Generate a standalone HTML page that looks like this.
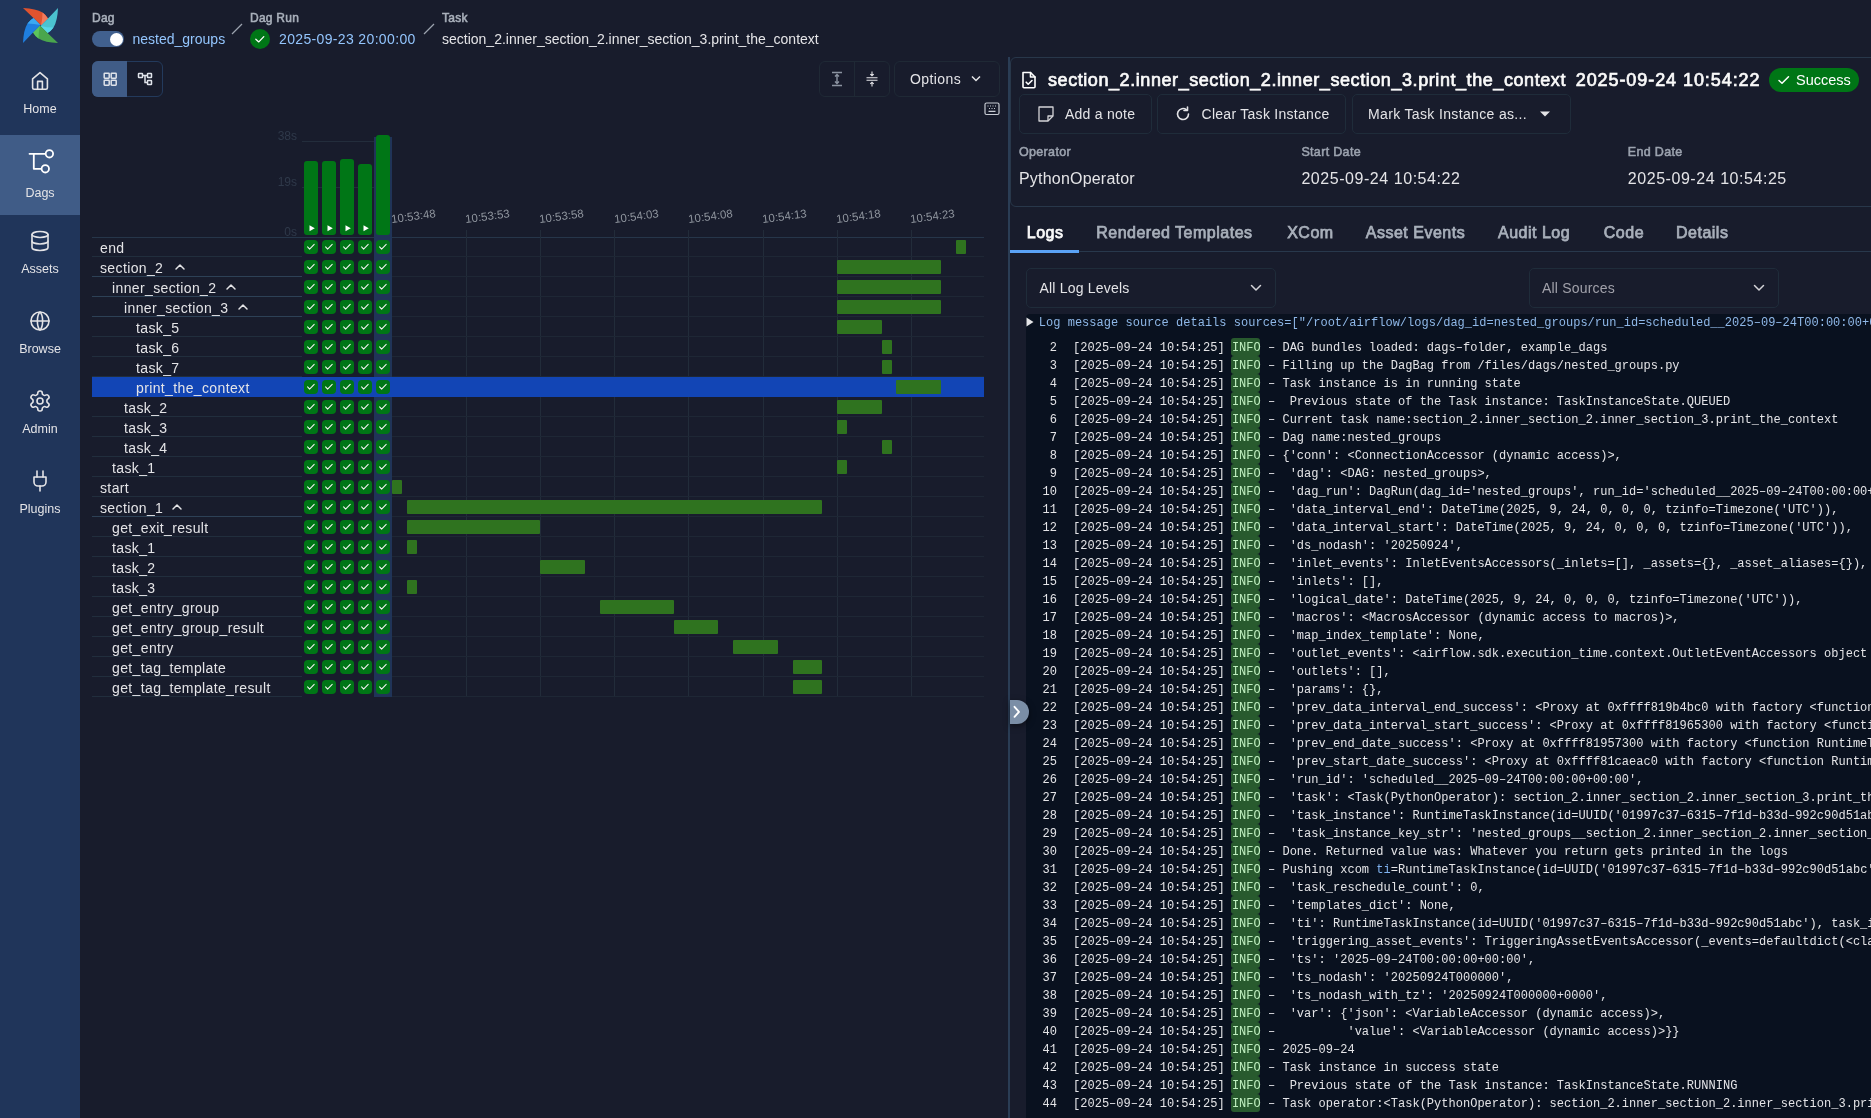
<!DOCTYPE html><html><head><meta charset="utf-8"><style>
html,body{margin:0;padding:0;}
body{width:1871px;height:1118px;overflow:hidden;position:relative;background:#181c2c;font-family:'Liberation Sans', sans-serif;}
.t{position:absolute;white-space:pre;}
.b{position:absolute;box-sizing:border-box;}
svg{position:absolute;overflow:visible;}
</style></head><body><div style="position:absolute;left:0;top:0;width:1871px;height:1118px;will-change:transform;overflow:hidden">
<div class="b" style="left:0px;top:0px;width:80px;height:1118px;background:#20355a;"></div>
<div class="b" style="left:0px;top:135px;width:80px;height:80px;background:#405c87;"></div>
<svg style="left:23px;top:8px" width="35" height="35" viewBox="0 0 35 35"><g><path d="M0 0 Q13 0.5 19.5 4.5 Q23 7 25 10.5 L18 17.5 Q14 13.5 11 10.5 Z" fill="#e0532f"/><path d="M19.5 4.5 Q23 7 25 10.5 L18 17.5 Q19.5 11 19.5 4.5 Z" fill="#f27a5c"/></g><g transform="rotate(90 17.5 17.5)"><path d="M0 0 Q13 0.5 19.5 4.5 Q23 7 25 10.5 L18 17.5 Q14 13.5 11 10.5 Z" fill="#4bc3cf"/><path d="M19.5 4.5 Q23 7 25 10.5 L18 17.5 Q19.5 11 19.5 4.5 Z" fill="#58d6e8"/></g><g transform="rotate(180 17.5 17.5)"><path d="M0 0 Q13 0.5 19.5 4.5 Q23 7 25 10.5 L18 17.5 Q14 13.5 11 10.5 Z" fill="#4aa64d"/><path d="M19.5 4.5 Q23 7 25 10.5 L18 17.5 Q19.5 11 19.5 4.5 Z" fill="#5cc45c"/></g><g transform="rotate(270 17.5 17.5)"><path d="M0 0 Q13 0.5 19.5 4.5 Q23 7 25 10.5 L18 17.5 Q14 13.5 11 10.5 Z" fill="#1f7fe0"/><path d="M19.5 4.5 Q23 7 25 10.5 L18 17.5 Q19.5 11 19.5 4.5 Z" fill="#3ba9f2"/></g></svg>
<svg style="left:28px;top:69px" width="24" height="24" viewBox="0 0 24 24" fill="none" stroke="#e4e4e7" stroke-width="1.6" stroke-linecap="round" stroke-linejoin="round"><path d="M4.6 9.8 L12 3.6 L19.4 9.8 V18.8 Q19.4 20.3 17.9 20.3 H6.1 Q4.6 20.3 4.6 18.8 Z"/><path d="M9.6 20.3 V12.4 H14.4 V20.3"/></svg>
<div class="t" style="left:0;width:80px;text-align:center;top:103px;font-size:12.5px;line-height:13px;color:#e4e4e7">Home</div>
<svg style="left:20px;top:140px" width="40" height="40" fill="none" stroke="#fff" stroke-width="1.8" stroke-linecap="round" stroke-linejoin="round"><path d="M9.5 13.8 H25.7 M13.8 13.8 V28.8 H21.6"/><circle cx="29.4" cy="13.8" r="3.7" fill="#405c87"/><circle cx="25.3" cy="28.8" r="3.7" fill="#405c87"/></svg>
<div class="t" style="left:0;width:80px;text-align:center;top:187px;font-size:12.5px;line-height:13px;color:#e4e4e7">Dags</div>
<svg style="left:28px;top:229px" width="24" height="24" viewBox="0 0 24 24" fill="none" stroke="#e4e4e7" stroke-width="1.6" stroke-linecap="round" stroke-linejoin="round"><ellipse cx="12" cy="5.5" rx="8" ry="3"/><path d="M4 5.5 V18.5 A8 3 0 0 0 20 18.5 V5.5"/><path d="M4 12 A8 3 0 0 0 20 12"/></svg>
<div class="t" style="left:0;width:80px;text-align:center;top:263px;font-size:12.5px;line-height:13px;color:#e4e4e7">Assets</div>
<svg style="left:28px;top:309px" width="24" height="24" viewBox="0 0 24 24" fill="none" stroke="#e4e4e7" stroke-width="1.6" stroke-linecap="round" stroke-linejoin="round"><circle cx="12" cy="12" r="9"/><path d="M3 12 H21"/><path d="M12 3 C8.5 6.5 8.5 17.5 12 21 C15.5 17.5 15.5 6.5 12 3Z"/></svg>
<div class="t" style="left:0;width:80px;text-align:center;top:343px;font-size:12.5px;line-height:13px;color:#e4e4e7">Browse</div>
<svg style="left:28px;top:389px" width="24" height="24" viewBox="0 0 24 24" fill="none" stroke="#e4e4e7" stroke-width="1.6" stroke-linecap="round" stroke-linejoin="round"><path d="M12.22 2h-.44a2 2 0 0 0-2 2v.18a2 2 0 0 1-1 1.73l-.43.25a2 2 0 0 1-2 0l-.15-.08a2 2 0 0 0-2.73.73l-.22.38a2 2 0 0 0 .73 2.73l.15.1a2 2 0 0 1 1 1.72v.51a2 2 0 0 1-1 1.74l-.15.09a2 2 0 0 0-.73 2.73l.22.38a2 2 0 0 0 2.73.73l.15-.08a2 2 0 0 1 2 0l.43.25a2 2 0 0 1 1 1.73V20a2 2 0 0 0 2 2h.44a2 2 0 0 0 2-2v-.18a2 2 0 0 1 1-1.73l.43-.25a2 2 0 0 1 2 0l.15.08a2 2 0 0 0 2.73-.73l.22-.39a2 2 0 0 0-.73-2.73l-.15-.08a2 2 0 0 1-1-1.74v-.5a2 2 0 0 1 1-1.74l.15-.09a2 2 0 0 0 .73-2.73l-.22-.38a2 2 0 0 0-2.73-.73l-.15.08a2 2 0 0 1-2 0l-.43-.25a2 2 0 0 1-1-1.73V4a2 2 0 0 0-2-2z"/><circle cx="12" cy="12" r="3"/></svg>
<div class="t" style="left:0;width:80px;text-align:center;top:423px;font-size:12.5px;line-height:13px;color:#e4e4e7">Admin</div>
<svg style="left:28px;top:469px" width="24" height="24" viewBox="0 0 24 24" fill="none" stroke="#e4e4e7" stroke-width="1.6" stroke-linecap="round" stroke-linejoin="round"><path d="M12 22v-5"/><path d="M9 8V2"/><path d="M15 8V2"/><path d="M18 8v5a4 4 0 0 1-4 4h-4a4 4 0 0 1-4-4V8Z"/></svg>
<div class="t" style="left:0;width:80px;text-align:center;top:503px;font-size:12.5px;line-height:13px;color:#e4e4e7">Plugins</div>
<div class="t" style="left:92px;top:12.30px;font-size:12px;line-height:12px;color:#a9b0bb;letter-spacing:0.25px;-webkit-text-stroke:0.55px #a9b0bb;">Dag</div>
<div class="b" style="left:92px;top:31px;width:32px;height:16px;background:#41608e;border-radius:8px;"></div>
<div class="b" style="left:109.5px;top:32.5px;width:13px;height:13px;border-radius:50%;background:#fff"></div>
<div class="t" style="left:132.5px;top:32.00px;font-size:14px;line-height:14px;color:#93c5fd;">nested_groups</div>
<svg style="left:231px;top:23px" width="12" height="12"><path d="M1 11 L11 1" stroke="#9ca3af" stroke-width="1.2"/></svg>
<div class="t" style="left:250px;top:12.30px;font-size:12px;line-height:12px;color:#a9b0bb;letter-spacing:0.25px;-webkit-text-stroke:0.55px #a9b0bb;">Dag Run</div>
<div class="b" style="left:250px;top:29px;width:20px;height:20px;border-radius:50%;background:#007616"></div>
<svg style="left:250px;top:29px" width="20" height="20"><path d="M5.8 10.2 L8.8 12.9 L13.8 7.6" fill="none" stroke="#fff" stroke-width="1.3" stroke-linecap="round" stroke-linejoin="round"/></svg>
<div class="t" style="left:279px;top:32.00px;font-size:14px;line-height:14px;color:#93c5fd;letter-spacing:0.35px;">2025-09-23 20:00:00</div>
<svg style="left:423px;top:23px" width="12" height="12"><path d="M1 11 L11 1" stroke="#9ca3af" stroke-width="1.2"/></svg>
<div class="t" style="left:442px;top:12.30px;font-size:12px;line-height:12px;color:#a9b0bb;letter-spacing:0.25px;-webkit-text-stroke:0.55px #a9b0bb;">Task</div>
<div class="t" style="left:442px;top:32.00px;font-size:14px;line-height:14px;color:#e4e4e7;">section_2.inner_section_2.inner_section_3.print_the_context</div>
<div class="b" style="left:92px;top:61px;width:71px;height:36px;border:1px solid #233a5c;border-radius:6px;"></div>
<div class="b" style="left:92px;top:61px;width:35px;height:36px;background:#405c87;border-radius:6px 0 0 6px;"></div>
<svg style="left:102px;top:71px" width="16" height="16" fill="none" stroke="#dfe3ea" stroke-width="1.5"><rect x="2.2" x2="0" y="2.2" width="5" height="5" rx="0.6"/><rect x="9.2" y="2.2" width="5" height="5" rx="0.6"/><rect x="2.2" y="9.2" width="5" height="5" rx="0.6"/><rect x="9.2" y="9.2" width="5" height="5" rx="0.6"/></svg>
<svg style="left:137px;top:71px" width="16" height="16" fill="none" stroke="#dfe3ea" stroke-width="1.5"><rect x="1.5" y="2.5" width="4" height="4" rx="0.5"/><rect x="10.5" y="2.5" width="4" height="4" rx="0.5"/><rect x="10.5" y="9.5" width="4" height="4" rx="0.5"/><path d="M5.5 4.5 H10.5 M8 4.5 V11.5 H10.5"/></svg>
<div class="b" style="left:819px;top:61px;width:71px;height:36px;border:1px solid #1f2935;border-radius:6px;"></div>
<div class="b" style="left:854px;top:61px;width:1px;height:36px;background:#1f2935;"></div>
<svg style="left:829px;top:71px" width="16" height="16" fill="none" stroke="#8b93a1" stroke-width="1.4"><path d="M3 1.5 H13 M3 14.5 H13 M8 3.5 V12.5 M6 5.5 L8 3.5 L10 5.5 M6 10.5 L8 12.5 L10 10.5"/></svg>
<svg style="left:864px;top:71px" width="16" height="16" fill="none" stroke="#e4e4e7" stroke-width="1.1"><path d="M2.5 6.8 H13.5 M2.5 9.2 H13.5 M8 0.5 V4.8 M6.3 3.1 L8 4.8 L9.7 3.1 M8 15.5 V11.2 M6.3 12.9 L8 11.2 L9.7 12.9"/></svg>
<div class="b" style="left:894px;top:61px;width:106px;height:36px;border:1px solid #1f2935;border-radius:6px;"></div>
<div class="t" style="left:910px;top:72.00px;font-size:14px;line-height:14px;color:#e4e4e7;letter-spacing:0.4px;">Options</div>
<svg style="left:970px;top:74px" width="12" height="10" fill="none" stroke="#e4e4e7" stroke-width="1.5"><path d="M2 2.5 L6 6.5 L10 2.5"/></svg>
<svg style="left:984px;top:102px" width="16" height="14" fill="none" stroke="#c8ccd4" stroke-width="1.2"><rect x="1" y="1" width="14" height="11.5" rx="1.5"/><path d="M3.5 4 H4.5 M6 4 H7 M8.5 4 H9.5 M11 4 H12 M5 6.5 H6 M7.5 6.5 H8.5 M10 6.5 H11 M4.5 9.3 H11.5"/></svg>
<div class="t" style="left:257px;width:40px;text-align:right;top:129.5px;font-size:12px;line-height:12px;color:#2f394a">38s</div>
<div class="t" style="left:257px;width:40px;text-align:right;top:175.5px;font-size:12px;line-height:12px;color:#2f394a">19s</div>
<div class="t" style="left:257px;width:40px;text-align:right;top:226px;font-size:12px;line-height:12px;color:#2f394a">0s</div>
<div class="b" style="left:302px;top:141px;width:72px;height:1px;background:#232d3c;"></div>
<div class="b" style="left:302px;top:187px;width:72px;height:1px;background:#232d3c;"></div>
<div class="b" style="left:92px;top:237px;width:892px;height:1px;background:#26364a;"></div>
<div class="b" style="left:374px;top:137px;width:18px;height:560px;background:#203458;"></div>
<div class="b" style="left:304px;top:161px;width:14px;height:74px;background:#007616;border-radius:3px;"></div>
<svg style="left:308.5px;top:225px" width="7" height="7"><path d="M0.5 0.3 L5.8 3.3 L0.5 6.3Z" fill="#fff"/></svg>
<div class="b" style="left:322px;top:161px;width:14px;height:74px;background:#007616;border-radius:3px;"></div>
<svg style="left:326.5px;top:225px" width="7" height="7"><path d="M0.5 0.3 L5.8 3.3 L0.5 6.3Z" fill="#fff"/></svg>
<div class="b" style="left:340px;top:159px;width:14px;height:76px;background:#007616;border-radius:3px;"></div>
<svg style="left:344.5px;top:225px" width="7" height="7"><path d="M0.5 0.3 L5.8 3.3 L0.5 6.3Z" fill="#fff"/></svg>
<div class="b" style="left:358px;top:164px;width:14px;height:71px;background:#007616;border-radius:3px;"></div>
<svg style="left:362.5px;top:225px" width="7" height="7"><path d="M0.5 0.3 L5.8 3.3 L0.5 6.3Z" fill="#fff"/></svg>
<div class="b" style="left:376px;top:135px;width:14px;height:100px;background:#007616;border-radius:3px;"></div>
<div class="b" style="left:466px;top:230px;width:1px;height:467px;background:#222c3a;"></div>
<div class="b" style="left:540px;top:230px;width:1px;height:467px;background:#222c3a;"></div>
<div class="b" style="left:614px;top:230px;width:1px;height:467px;background:#222c3a;"></div>
<div class="b" style="left:688px;top:230px;width:1px;height:467px;background:#222c3a;"></div>
<div class="b" style="left:763px;top:230px;width:1px;height:467px;background:#222c3a;"></div>
<div class="b" style="left:837px;top:230px;width:1px;height:467px;background:#222c3a;"></div>
<div class="b" style="left:911px;top:230px;width:1px;height:467px;background:#222c3a;"></div>
<div class="b" style="left:92px;top:256px;width:210px;height:1px;background:#212e3d;"></div>
<div class="b" style="left:392px;top:256px;width:592px;height:1px;background:#1e2735;"></div>
<div class="t" style="left:100px;top:241.40px;font-size:14px;line-height:14px;color:#e4e4e7;letter-spacing:0.37px;">end</div>
<div class="b" style="left:304px;top:240px;width:14px;height:14px;border-radius:4px;background:#007616"></div>
<svg style="left:304px;top:240px" width="14" height="14"><path d="M3.6 6.8 L5.6 9.1 L10.2 4.4" fill="none" stroke="#f4f4f5" stroke-width="1.05" stroke-linecap="round" stroke-linejoin="round"/></svg>
<div class="b" style="left:322px;top:240px;width:14px;height:14px;border-radius:4px;background:#007616"></div>
<svg style="left:322px;top:240px" width="14" height="14"><path d="M3.6 6.8 L5.6 9.1 L10.2 4.4" fill="none" stroke="#f4f4f5" stroke-width="1.05" stroke-linecap="round" stroke-linejoin="round"/></svg>
<div class="b" style="left:340px;top:240px;width:14px;height:14px;border-radius:4px;background:#007616"></div>
<svg style="left:340px;top:240px" width="14" height="14"><path d="M3.6 6.8 L5.6 9.1 L10.2 4.4" fill="none" stroke="#f4f4f5" stroke-width="1.05" stroke-linecap="round" stroke-linejoin="round"/></svg>
<div class="b" style="left:358px;top:240px;width:14px;height:14px;border-radius:4px;background:#007616"></div>
<svg style="left:358px;top:240px" width="14" height="14"><path d="M3.6 6.8 L5.6 9.1 L10.2 4.4" fill="none" stroke="#f4f4f5" stroke-width="1.05" stroke-linecap="round" stroke-linejoin="round"/></svg>
<div class="b" style="left:376px;top:240px;width:14px;height:14px;border-radius:4px;background:#007616"></div>
<svg style="left:376px;top:240px" width="14" height="14"><path d="M3.6 6.8 L5.6 9.1 L10.2 4.4" fill="none" stroke="#f4f4f5" stroke-width="1.05" stroke-linecap="round" stroke-linejoin="round"/></svg>
<div class="b" style="left:956px;top:240px;width:10px;height:14px;background:#2f731f;border-radius:1px;"></div>
<div class="b" style="left:92px;top:276px;width:210px;height:1px;background:#2d4156;"></div>
<div class="b" style="left:392px;top:276px;width:592px;height:1px;background:#1e2735;"></div>
<div class="t" style="left:100px;top:261.40px;font-size:14px;line-height:14px;color:#e4e4e7;letter-spacing:0.37px;">section_2</div>
<svg style="left:175px;top:263px" width="10" height="8"><path d="M1 6 L5 2 L9 6" fill="none" stroke="#e4e4e7" stroke-width="1.5" stroke-linecap="round" stroke-linejoin="round"/></svg>
<div class="b" style="left:304px;top:260px;width:14px;height:14px;border-radius:4px;background:#007616"></div>
<svg style="left:304px;top:260px" width="14" height="14"><path d="M3.6 6.8 L5.6 9.1 L10.2 4.4" fill="none" stroke="#f4f4f5" stroke-width="1.05" stroke-linecap="round" stroke-linejoin="round"/></svg>
<div class="b" style="left:322px;top:260px;width:14px;height:14px;border-radius:4px;background:#007616"></div>
<svg style="left:322px;top:260px" width="14" height="14"><path d="M3.6 6.8 L5.6 9.1 L10.2 4.4" fill="none" stroke="#f4f4f5" stroke-width="1.05" stroke-linecap="round" stroke-linejoin="round"/></svg>
<div class="b" style="left:340px;top:260px;width:14px;height:14px;border-radius:4px;background:#007616"></div>
<svg style="left:340px;top:260px" width="14" height="14"><path d="M3.6 6.8 L5.6 9.1 L10.2 4.4" fill="none" stroke="#f4f4f5" stroke-width="1.05" stroke-linecap="round" stroke-linejoin="round"/></svg>
<div class="b" style="left:358px;top:260px;width:14px;height:14px;border-radius:4px;background:#007616"></div>
<svg style="left:358px;top:260px" width="14" height="14"><path d="M3.6 6.8 L5.6 9.1 L10.2 4.4" fill="none" stroke="#f4f4f5" stroke-width="1.05" stroke-linecap="round" stroke-linejoin="round"/></svg>
<div class="b" style="left:376px;top:260px;width:14px;height:14px;border-radius:4px;background:#007616"></div>
<svg style="left:376px;top:260px" width="14" height="14"><path d="M3.6 6.8 L5.6 9.1 L10.2 4.4" fill="none" stroke="#f4f4f5" stroke-width="1.05" stroke-linecap="round" stroke-linejoin="round"/></svg>
<div class="b" style="left:837px;top:260px;width:104px;height:14px;background:#2f731f;border-radius:1px;"></div>
<div class="b" style="left:92px;top:296px;width:210px;height:1px;background:#2d4156;"></div>
<div class="b" style="left:392px;top:296px;width:592px;height:1px;background:#1e2735;"></div>
<div class="t" style="left:112px;top:281.40px;font-size:14px;line-height:14px;color:#e4e4e7;letter-spacing:0.37px;">inner_section_2</div>
<svg style="left:226px;top:283px" width="10" height="8"><path d="M1 6 L5 2 L9 6" fill="none" stroke="#e4e4e7" stroke-width="1.5" stroke-linecap="round" stroke-linejoin="round"/></svg>
<div class="b" style="left:304px;top:280px;width:14px;height:14px;border-radius:4px;background:#007616"></div>
<svg style="left:304px;top:280px" width="14" height="14"><path d="M3.6 6.8 L5.6 9.1 L10.2 4.4" fill="none" stroke="#f4f4f5" stroke-width="1.05" stroke-linecap="round" stroke-linejoin="round"/></svg>
<div class="b" style="left:322px;top:280px;width:14px;height:14px;border-radius:4px;background:#007616"></div>
<svg style="left:322px;top:280px" width="14" height="14"><path d="M3.6 6.8 L5.6 9.1 L10.2 4.4" fill="none" stroke="#f4f4f5" stroke-width="1.05" stroke-linecap="round" stroke-linejoin="round"/></svg>
<div class="b" style="left:340px;top:280px;width:14px;height:14px;border-radius:4px;background:#007616"></div>
<svg style="left:340px;top:280px" width="14" height="14"><path d="M3.6 6.8 L5.6 9.1 L10.2 4.4" fill="none" stroke="#f4f4f5" stroke-width="1.05" stroke-linecap="round" stroke-linejoin="round"/></svg>
<div class="b" style="left:358px;top:280px;width:14px;height:14px;border-radius:4px;background:#007616"></div>
<svg style="left:358px;top:280px" width="14" height="14"><path d="M3.6 6.8 L5.6 9.1 L10.2 4.4" fill="none" stroke="#f4f4f5" stroke-width="1.05" stroke-linecap="round" stroke-linejoin="round"/></svg>
<div class="b" style="left:376px;top:280px;width:14px;height:14px;border-radius:4px;background:#007616"></div>
<svg style="left:376px;top:280px" width="14" height="14"><path d="M3.6 6.8 L5.6 9.1 L10.2 4.4" fill="none" stroke="#f4f4f5" stroke-width="1.05" stroke-linecap="round" stroke-linejoin="round"/></svg>
<div class="b" style="left:837px;top:280px;width:104px;height:14px;background:#2f731f;border-radius:1px;"></div>
<div class="b" style="left:92px;top:316px;width:210px;height:1px;background:#2d4156;"></div>
<div class="b" style="left:392px;top:316px;width:592px;height:1px;background:#1e2735;"></div>
<div class="t" style="left:124px;top:301.40px;font-size:14px;line-height:14px;color:#e4e4e7;letter-spacing:0.37px;">inner_section_3</div>
<svg style="left:238px;top:303px" width="10" height="8"><path d="M1 6 L5 2 L9 6" fill="none" stroke="#e4e4e7" stroke-width="1.5" stroke-linecap="round" stroke-linejoin="round"/></svg>
<div class="b" style="left:304px;top:300px;width:14px;height:14px;border-radius:4px;background:#007616"></div>
<svg style="left:304px;top:300px" width="14" height="14"><path d="M3.6 6.8 L5.6 9.1 L10.2 4.4" fill="none" stroke="#f4f4f5" stroke-width="1.05" stroke-linecap="round" stroke-linejoin="round"/></svg>
<div class="b" style="left:322px;top:300px;width:14px;height:14px;border-radius:4px;background:#007616"></div>
<svg style="left:322px;top:300px" width="14" height="14"><path d="M3.6 6.8 L5.6 9.1 L10.2 4.4" fill="none" stroke="#f4f4f5" stroke-width="1.05" stroke-linecap="round" stroke-linejoin="round"/></svg>
<div class="b" style="left:340px;top:300px;width:14px;height:14px;border-radius:4px;background:#007616"></div>
<svg style="left:340px;top:300px" width="14" height="14"><path d="M3.6 6.8 L5.6 9.1 L10.2 4.4" fill="none" stroke="#f4f4f5" stroke-width="1.05" stroke-linecap="round" stroke-linejoin="round"/></svg>
<div class="b" style="left:358px;top:300px;width:14px;height:14px;border-radius:4px;background:#007616"></div>
<svg style="left:358px;top:300px" width="14" height="14"><path d="M3.6 6.8 L5.6 9.1 L10.2 4.4" fill="none" stroke="#f4f4f5" stroke-width="1.05" stroke-linecap="round" stroke-linejoin="round"/></svg>
<div class="b" style="left:376px;top:300px;width:14px;height:14px;border-radius:4px;background:#007616"></div>
<svg style="left:376px;top:300px" width="14" height="14"><path d="M3.6 6.8 L5.6 9.1 L10.2 4.4" fill="none" stroke="#f4f4f5" stroke-width="1.05" stroke-linecap="round" stroke-linejoin="round"/></svg>
<div class="b" style="left:837px;top:300px;width:104px;height:14px;background:#2f731f;border-radius:1px;"></div>
<div class="b" style="left:92px;top:336px;width:210px;height:1px;background:#212e3d;"></div>
<div class="b" style="left:392px;top:336px;width:592px;height:1px;background:#1e2735;"></div>
<div class="t" style="left:136px;top:321.40px;font-size:14px;line-height:14px;color:#e4e4e7;letter-spacing:0.37px;">task_5</div>
<div class="b" style="left:304px;top:320px;width:14px;height:14px;border-radius:4px;background:#007616"></div>
<svg style="left:304px;top:320px" width="14" height="14"><path d="M3.6 6.8 L5.6 9.1 L10.2 4.4" fill="none" stroke="#f4f4f5" stroke-width="1.05" stroke-linecap="round" stroke-linejoin="round"/></svg>
<div class="b" style="left:322px;top:320px;width:14px;height:14px;border-radius:4px;background:#007616"></div>
<svg style="left:322px;top:320px" width="14" height="14"><path d="M3.6 6.8 L5.6 9.1 L10.2 4.4" fill="none" stroke="#f4f4f5" stroke-width="1.05" stroke-linecap="round" stroke-linejoin="round"/></svg>
<div class="b" style="left:340px;top:320px;width:14px;height:14px;border-radius:4px;background:#007616"></div>
<svg style="left:340px;top:320px" width="14" height="14"><path d="M3.6 6.8 L5.6 9.1 L10.2 4.4" fill="none" stroke="#f4f4f5" stroke-width="1.05" stroke-linecap="round" stroke-linejoin="round"/></svg>
<div class="b" style="left:358px;top:320px;width:14px;height:14px;border-radius:4px;background:#007616"></div>
<svg style="left:358px;top:320px" width="14" height="14"><path d="M3.6 6.8 L5.6 9.1 L10.2 4.4" fill="none" stroke="#f4f4f5" stroke-width="1.05" stroke-linecap="round" stroke-linejoin="round"/></svg>
<div class="b" style="left:376px;top:320px;width:14px;height:14px;border-radius:4px;background:#007616"></div>
<svg style="left:376px;top:320px" width="14" height="14"><path d="M3.6 6.8 L5.6 9.1 L10.2 4.4" fill="none" stroke="#f4f4f5" stroke-width="1.05" stroke-linecap="round" stroke-linejoin="round"/></svg>
<div class="b" style="left:837px;top:320px;width:44.60000000000002px;height:14px;background:#2f731f;border-radius:1px;"></div>
<div class="b" style="left:92px;top:356px;width:210px;height:1px;background:#212e3d;"></div>
<div class="b" style="left:392px;top:356px;width:592px;height:1px;background:#1e2735;"></div>
<div class="t" style="left:136px;top:341.40px;font-size:14px;line-height:14px;color:#e4e4e7;letter-spacing:0.37px;">task_6</div>
<div class="b" style="left:304px;top:340px;width:14px;height:14px;border-radius:4px;background:#007616"></div>
<svg style="left:304px;top:340px" width="14" height="14"><path d="M3.6 6.8 L5.6 9.1 L10.2 4.4" fill="none" stroke="#f4f4f5" stroke-width="1.05" stroke-linecap="round" stroke-linejoin="round"/></svg>
<div class="b" style="left:322px;top:340px;width:14px;height:14px;border-radius:4px;background:#007616"></div>
<svg style="left:322px;top:340px" width="14" height="14"><path d="M3.6 6.8 L5.6 9.1 L10.2 4.4" fill="none" stroke="#f4f4f5" stroke-width="1.05" stroke-linecap="round" stroke-linejoin="round"/></svg>
<div class="b" style="left:340px;top:340px;width:14px;height:14px;border-radius:4px;background:#007616"></div>
<svg style="left:340px;top:340px" width="14" height="14"><path d="M3.6 6.8 L5.6 9.1 L10.2 4.4" fill="none" stroke="#f4f4f5" stroke-width="1.05" stroke-linecap="round" stroke-linejoin="round"/></svg>
<div class="b" style="left:358px;top:340px;width:14px;height:14px;border-radius:4px;background:#007616"></div>
<svg style="left:358px;top:340px" width="14" height="14"><path d="M3.6 6.8 L5.6 9.1 L10.2 4.4" fill="none" stroke="#f4f4f5" stroke-width="1.05" stroke-linecap="round" stroke-linejoin="round"/></svg>
<div class="b" style="left:376px;top:340px;width:14px;height:14px;border-radius:4px;background:#007616"></div>
<svg style="left:376px;top:340px" width="14" height="14"><path d="M3.6 6.8 L5.6 9.1 L10.2 4.4" fill="none" stroke="#f4f4f5" stroke-width="1.05" stroke-linecap="round" stroke-linejoin="round"/></svg>
<div class="b" style="left:881.6px;top:340px;width:10.0px;height:14px;background:#2f731f;border-radius:1px;"></div>
<div class="b" style="left:92px;top:376px;width:210px;height:1px;background:#212e3d;"></div>
<div class="b" style="left:392px;top:376px;width:592px;height:1px;background:#1e2735;"></div>
<div class="t" style="left:136px;top:361.40px;font-size:14px;line-height:14px;color:#e4e4e7;letter-spacing:0.37px;">task_7</div>
<div class="b" style="left:304px;top:360px;width:14px;height:14px;border-radius:4px;background:#007616"></div>
<svg style="left:304px;top:360px" width="14" height="14"><path d="M3.6 6.8 L5.6 9.1 L10.2 4.4" fill="none" stroke="#f4f4f5" stroke-width="1.05" stroke-linecap="round" stroke-linejoin="round"/></svg>
<div class="b" style="left:322px;top:360px;width:14px;height:14px;border-radius:4px;background:#007616"></div>
<svg style="left:322px;top:360px" width="14" height="14"><path d="M3.6 6.8 L5.6 9.1 L10.2 4.4" fill="none" stroke="#f4f4f5" stroke-width="1.05" stroke-linecap="round" stroke-linejoin="round"/></svg>
<div class="b" style="left:340px;top:360px;width:14px;height:14px;border-radius:4px;background:#007616"></div>
<svg style="left:340px;top:360px" width="14" height="14"><path d="M3.6 6.8 L5.6 9.1 L10.2 4.4" fill="none" stroke="#f4f4f5" stroke-width="1.05" stroke-linecap="round" stroke-linejoin="round"/></svg>
<div class="b" style="left:358px;top:360px;width:14px;height:14px;border-radius:4px;background:#007616"></div>
<svg style="left:358px;top:360px" width="14" height="14"><path d="M3.6 6.8 L5.6 9.1 L10.2 4.4" fill="none" stroke="#f4f4f5" stroke-width="1.05" stroke-linecap="round" stroke-linejoin="round"/></svg>
<div class="b" style="left:376px;top:360px;width:14px;height:14px;border-radius:4px;background:#007616"></div>
<svg style="left:376px;top:360px" width="14" height="14"><path d="M3.6 6.8 L5.6 9.1 L10.2 4.4" fill="none" stroke="#f4f4f5" stroke-width="1.05" stroke-linecap="round" stroke-linejoin="round"/></svg>
<div class="b" style="left:881.6px;top:360px;width:10.0px;height:14px;background:#2f731f;border-radius:1px;"></div>
<div class="b" style="left:92px;top:377px;width:892px;height:20px;background:#1245b5;"></div>
<div class="t" style="left:136px;top:381.40px;font-size:14px;line-height:14px;color:#e4e4e7;letter-spacing:0.37px;">print_the_context</div>
<div class="b" style="left:304px;top:380px;width:14px;height:14px;border-radius:4px;background:#007616"></div>
<svg style="left:304px;top:380px" width="14" height="14"><path d="M3.6 6.8 L5.6 9.1 L10.2 4.4" fill="none" stroke="#f4f4f5" stroke-width="1.05" stroke-linecap="round" stroke-linejoin="round"/></svg>
<div class="b" style="left:322px;top:380px;width:14px;height:14px;border-radius:4px;background:#007616"></div>
<svg style="left:322px;top:380px" width="14" height="14"><path d="M3.6 6.8 L5.6 9.1 L10.2 4.4" fill="none" stroke="#f4f4f5" stroke-width="1.05" stroke-linecap="round" stroke-linejoin="round"/></svg>
<div class="b" style="left:340px;top:380px;width:14px;height:14px;border-radius:4px;background:#007616"></div>
<svg style="left:340px;top:380px" width="14" height="14"><path d="M3.6 6.8 L5.6 9.1 L10.2 4.4" fill="none" stroke="#f4f4f5" stroke-width="1.05" stroke-linecap="round" stroke-linejoin="round"/></svg>
<div class="b" style="left:358px;top:380px;width:14px;height:14px;border-radius:4px;background:#007616"></div>
<svg style="left:358px;top:380px" width="14" height="14"><path d="M3.6 6.8 L5.6 9.1 L10.2 4.4" fill="none" stroke="#f4f4f5" stroke-width="1.05" stroke-linecap="round" stroke-linejoin="round"/></svg>
<div class="b" style="left:376px;top:380px;width:14px;height:14px;border-radius:4px;background:#007616"></div>
<svg style="left:376px;top:380px" width="14" height="14"><path d="M3.6 6.8 L5.6 9.1 L10.2 4.4" fill="none" stroke="#f4f4f5" stroke-width="1.05" stroke-linecap="round" stroke-linejoin="round"/></svg>
<div class="b" style="left:896.2px;top:380px;width:44.799999999999955px;height:14px;background:#2f731f;border-radius:1px;"></div>
<div class="b" style="left:92px;top:416px;width:210px;height:1px;background:#212e3d;"></div>
<div class="b" style="left:392px;top:416px;width:592px;height:1px;background:#1e2735;"></div>
<div class="t" style="left:124px;top:401.40px;font-size:14px;line-height:14px;color:#e4e4e7;letter-spacing:0.37px;">task_2</div>
<div class="b" style="left:304px;top:400px;width:14px;height:14px;border-radius:4px;background:#007616"></div>
<svg style="left:304px;top:400px" width="14" height="14"><path d="M3.6 6.8 L5.6 9.1 L10.2 4.4" fill="none" stroke="#f4f4f5" stroke-width="1.05" stroke-linecap="round" stroke-linejoin="round"/></svg>
<div class="b" style="left:322px;top:400px;width:14px;height:14px;border-radius:4px;background:#007616"></div>
<svg style="left:322px;top:400px" width="14" height="14"><path d="M3.6 6.8 L5.6 9.1 L10.2 4.4" fill="none" stroke="#f4f4f5" stroke-width="1.05" stroke-linecap="round" stroke-linejoin="round"/></svg>
<div class="b" style="left:340px;top:400px;width:14px;height:14px;border-radius:4px;background:#007616"></div>
<svg style="left:340px;top:400px" width="14" height="14"><path d="M3.6 6.8 L5.6 9.1 L10.2 4.4" fill="none" stroke="#f4f4f5" stroke-width="1.05" stroke-linecap="round" stroke-linejoin="round"/></svg>
<div class="b" style="left:358px;top:400px;width:14px;height:14px;border-radius:4px;background:#007616"></div>
<svg style="left:358px;top:400px" width="14" height="14"><path d="M3.6 6.8 L5.6 9.1 L10.2 4.4" fill="none" stroke="#f4f4f5" stroke-width="1.05" stroke-linecap="round" stroke-linejoin="round"/></svg>
<div class="b" style="left:376px;top:400px;width:14px;height:14px;border-radius:4px;background:#007616"></div>
<svg style="left:376px;top:400px" width="14" height="14"><path d="M3.6 6.8 L5.6 9.1 L10.2 4.4" fill="none" stroke="#f4f4f5" stroke-width="1.05" stroke-linecap="round" stroke-linejoin="round"/></svg>
<div class="b" style="left:837px;top:400px;width:44.60000000000002px;height:14px;background:#2f731f;border-radius:1px;"></div>
<div class="b" style="left:92px;top:436px;width:210px;height:1px;background:#212e3d;"></div>
<div class="b" style="left:392px;top:436px;width:592px;height:1px;background:#1e2735;"></div>
<div class="t" style="left:124px;top:421.40px;font-size:14px;line-height:14px;color:#e4e4e7;letter-spacing:0.37px;">task_3</div>
<div class="b" style="left:304px;top:420px;width:14px;height:14px;border-radius:4px;background:#007616"></div>
<svg style="left:304px;top:420px" width="14" height="14"><path d="M3.6 6.8 L5.6 9.1 L10.2 4.4" fill="none" stroke="#f4f4f5" stroke-width="1.05" stroke-linecap="round" stroke-linejoin="round"/></svg>
<div class="b" style="left:322px;top:420px;width:14px;height:14px;border-radius:4px;background:#007616"></div>
<svg style="left:322px;top:420px" width="14" height="14"><path d="M3.6 6.8 L5.6 9.1 L10.2 4.4" fill="none" stroke="#f4f4f5" stroke-width="1.05" stroke-linecap="round" stroke-linejoin="round"/></svg>
<div class="b" style="left:340px;top:420px;width:14px;height:14px;border-radius:4px;background:#007616"></div>
<svg style="left:340px;top:420px" width="14" height="14"><path d="M3.6 6.8 L5.6 9.1 L10.2 4.4" fill="none" stroke="#f4f4f5" stroke-width="1.05" stroke-linecap="round" stroke-linejoin="round"/></svg>
<div class="b" style="left:358px;top:420px;width:14px;height:14px;border-radius:4px;background:#007616"></div>
<svg style="left:358px;top:420px" width="14" height="14"><path d="M3.6 6.8 L5.6 9.1 L10.2 4.4" fill="none" stroke="#f4f4f5" stroke-width="1.05" stroke-linecap="round" stroke-linejoin="round"/></svg>
<div class="b" style="left:376px;top:420px;width:14px;height:14px;border-radius:4px;background:#007616"></div>
<svg style="left:376px;top:420px" width="14" height="14"><path d="M3.6 6.8 L5.6 9.1 L10.2 4.4" fill="none" stroke="#f4f4f5" stroke-width="1.05" stroke-linecap="round" stroke-linejoin="round"/></svg>
<div class="b" style="left:837px;top:420px;width:10.200000000000045px;height:14px;background:#2f731f;border-radius:1px;"></div>
<div class="b" style="left:92px;top:456px;width:210px;height:1px;background:#212e3d;"></div>
<div class="b" style="left:392px;top:456px;width:592px;height:1px;background:#1e2735;"></div>
<div class="t" style="left:124px;top:441.40px;font-size:14px;line-height:14px;color:#e4e4e7;letter-spacing:0.37px;">task_4</div>
<div class="b" style="left:304px;top:440px;width:14px;height:14px;border-radius:4px;background:#007616"></div>
<svg style="left:304px;top:440px" width="14" height="14"><path d="M3.6 6.8 L5.6 9.1 L10.2 4.4" fill="none" stroke="#f4f4f5" stroke-width="1.05" stroke-linecap="round" stroke-linejoin="round"/></svg>
<div class="b" style="left:322px;top:440px;width:14px;height:14px;border-radius:4px;background:#007616"></div>
<svg style="left:322px;top:440px" width="14" height="14"><path d="M3.6 6.8 L5.6 9.1 L10.2 4.4" fill="none" stroke="#f4f4f5" stroke-width="1.05" stroke-linecap="round" stroke-linejoin="round"/></svg>
<div class="b" style="left:340px;top:440px;width:14px;height:14px;border-radius:4px;background:#007616"></div>
<svg style="left:340px;top:440px" width="14" height="14"><path d="M3.6 6.8 L5.6 9.1 L10.2 4.4" fill="none" stroke="#f4f4f5" stroke-width="1.05" stroke-linecap="round" stroke-linejoin="round"/></svg>
<div class="b" style="left:358px;top:440px;width:14px;height:14px;border-radius:4px;background:#007616"></div>
<svg style="left:358px;top:440px" width="14" height="14"><path d="M3.6 6.8 L5.6 9.1 L10.2 4.4" fill="none" stroke="#f4f4f5" stroke-width="1.05" stroke-linecap="round" stroke-linejoin="round"/></svg>
<div class="b" style="left:376px;top:440px;width:14px;height:14px;border-radius:4px;background:#007616"></div>
<svg style="left:376px;top:440px" width="14" height="14"><path d="M3.6 6.8 L5.6 9.1 L10.2 4.4" fill="none" stroke="#f4f4f5" stroke-width="1.05" stroke-linecap="round" stroke-linejoin="round"/></svg>
<div class="b" style="left:881.6px;top:440px;width:10.0px;height:14px;background:#2f731f;border-radius:1px;"></div>
<div class="b" style="left:92px;top:476px;width:210px;height:1px;background:#212e3d;"></div>
<div class="b" style="left:392px;top:476px;width:592px;height:1px;background:#1e2735;"></div>
<div class="t" style="left:112px;top:461.40px;font-size:14px;line-height:14px;color:#e4e4e7;letter-spacing:0.37px;">task_1</div>
<div class="b" style="left:304px;top:460px;width:14px;height:14px;border-radius:4px;background:#007616"></div>
<svg style="left:304px;top:460px" width="14" height="14"><path d="M3.6 6.8 L5.6 9.1 L10.2 4.4" fill="none" stroke="#f4f4f5" stroke-width="1.05" stroke-linecap="round" stroke-linejoin="round"/></svg>
<div class="b" style="left:322px;top:460px;width:14px;height:14px;border-radius:4px;background:#007616"></div>
<svg style="left:322px;top:460px" width="14" height="14"><path d="M3.6 6.8 L5.6 9.1 L10.2 4.4" fill="none" stroke="#f4f4f5" stroke-width="1.05" stroke-linecap="round" stroke-linejoin="round"/></svg>
<div class="b" style="left:340px;top:460px;width:14px;height:14px;border-radius:4px;background:#007616"></div>
<svg style="left:340px;top:460px" width="14" height="14"><path d="M3.6 6.8 L5.6 9.1 L10.2 4.4" fill="none" stroke="#f4f4f5" stroke-width="1.05" stroke-linecap="round" stroke-linejoin="round"/></svg>
<div class="b" style="left:358px;top:460px;width:14px;height:14px;border-radius:4px;background:#007616"></div>
<svg style="left:358px;top:460px" width="14" height="14"><path d="M3.6 6.8 L5.6 9.1 L10.2 4.4" fill="none" stroke="#f4f4f5" stroke-width="1.05" stroke-linecap="round" stroke-linejoin="round"/></svg>
<div class="b" style="left:376px;top:460px;width:14px;height:14px;border-radius:4px;background:#007616"></div>
<svg style="left:376px;top:460px" width="14" height="14"><path d="M3.6 6.8 L5.6 9.1 L10.2 4.4" fill="none" stroke="#f4f4f5" stroke-width="1.05" stroke-linecap="round" stroke-linejoin="round"/></svg>
<div class="b" style="left:837px;top:460px;width:10px;height:14px;background:#2f731f;border-radius:1px;"></div>
<div class="b" style="left:92px;top:496px;width:210px;height:1px;background:#212e3d;"></div>
<div class="b" style="left:392px;top:496px;width:592px;height:1px;background:#1e2735;"></div>
<div class="t" style="left:100px;top:481.40px;font-size:14px;line-height:14px;color:#e4e4e7;letter-spacing:0.37px;">start</div>
<div class="b" style="left:304px;top:480px;width:14px;height:14px;border-radius:4px;background:#007616"></div>
<svg style="left:304px;top:480px" width="14" height="14"><path d="M3.6 6.8 L5.6 9.1 L10.2 4.4" fill="none" stroke="#f4f4f5" stroke-width="1.05" stroke-linecap="round" stroke-linejoin="round"/></svg>
<div class="b" style="left:322px;top:480px;width:14px;height:14px;border-radius:4px;background:#007616"></div>
<svg style="left:322px;top:480px" width="14" height="14"><path d="M3.6 6.8 L5.6 9.1 L10.2 4.4" fill="none" stroke="#f4f4f5" stroke-width="1.05" stroke-linecap="round" stroke-linejoin="round"/></svg>
<div class="b" style="left:340px;top:480px;width:14px;height:14px;border-radius:4px;background:#007616"></div>
<svg style="left:340px;top:480px" width="14" height="14"><path d="M3.6 6.8 L5.6 9.1 L10.2 4.4" fill="none" stroke="#f4f4f5" stroke-width="1.05" stroke-linecap="round" stroke-linejoin="round"/></svg>
<div class="b" style="left:358px;top:480px;width:14px;height:14px;border-radius:4px;background:#007616"></div>
<svg style="left:358px;top:480px" width="14" height="14"><path d="M3.6 6.8 L5.6 9.1 L10.2 4.4" fill="none" stroke="#f4f4f5" stroke-width="1.05" stroke-linecap="round" stroke-linejoin="round"/></svg>
<div class="b" style="left:376px;top:480px;width:14px;height:14px;border-radius:4px;background:#007616"></div>
<svg style="left:376px;top:480px" width="14" height="14"><path d="M3.6 6.8 L5.6 9.1 L10.2 4.4" fill="none" stroke="#f4f4f5" stroke-width="1.05" stroke-linecap="round" stroke-linejoin="round"/></svg>
<div class="b" style="left:392px;top:480px;width:10px;height:14px;background:#2f731f;border-radius:1px;"></div>
<div class="b" style="left:92px;top:516px;width:210px;height:1px;background:#2d4156;"></div>
<div class="b" style="left:392px;top:516px;width:592px;height:1px;background:#1e2735;"></div>
<div class="t" style="left:100px;top:501.40px;font-size:14px;line-height:14px;color:#e4e4e7;letter-spacing:0.37px;">section_1</div>
<svg style="left:171.5px;top:503px" width="10" height="8"><path d="M1 6 L5 2 L9 6" fill="none" stroke="#e4e4e7" stroke-width="1.5" stroke-linecap="round" stroke-linejoin="round"/></svg>
<div class="b" style="left:304px;top:500px;width:14px;height:14px;border-radius:4px;background:#007616"></div>
<svg style="left:304px;top:500px" width="14" height="14"><path d="M3.6 6.8 L5.6 9.1 L10.2 4.4" fill="none" stroke="#f4f4f5" stroke-width="1.05" stroke-linecap="round" stroke-linejoin="round"/></svg>
<div class="b" style="left:322px;top:500px;width:14px;height:14px;border-radius:4px;background:#007616"></div>
<svg style="left:322px;top:500px" width="14" height="14"><path d="M3.6 6.8 L5.6 9.1 L10.2 4.4" fill="none" stroke="#f4f4f5" stroke-width="1.05" stroke-linecap="round" stroke-linejoin="round"/></svg>
<div class="b" style="left:340px;top:500px;width:14px;height:14px;border-radius:4px;background:#007616"></div>
<svg style="left:340px;top:500px" width="14" height="14"><path d="M3.6 6.8 L5.6 9.1 L10.2 4.4" fill="none" stroke="#f4f4f5" stroke-width="1.05" stroke-linecap="round" stroke-linejoin="round"/></svg>
<div class="b" style="left:358px;top:500px;width:14px;height:14px;border-radius:4px;background:#007616"></div>
<svg style="left:358px;top:500px" width="14" height="14"><path d="M3.6 6.8 L5.6 9.1 L10.2 4.4" fill="none" stroke="#f4f4f5" stroke-width="1.05" stroke-linecap="round" stroke-linejoin="round"/></svg>
<div class="b" style="left:376px;top:500px;width:14px;height:14px;border-radius:4px;background:#007616"></div>
<svg style="left:376px;top:500px" width="14" height="14"><path d="M3.6 6.8 L5.6 9.1 L10.2 4.4" fill="none" stroke="#f4f4f5" stroke-width="1.05" stroke-linecap="round" stroke-linejoin="round"/></svg>
<div class="b" style="left:406.8px;top:500px;width:415.2px;height:14px;background:#2f731f;border-radius:1px;"></div>
<div class="b" style="left:92px;top:536px;width:210px;height:1px;background:#212e3d;"></div>
<div class="b" style="left:392px;top:536px;width:592px;height:1px;background:#1e2735;"></div>
<div class="t" style="left:112px;top:521.40px;font-size:14px;line-height:14px;color:#e4e4e7;letter-spacing:0.37px;">get_exit_result</div>
<div class="b" style="left:304px;top:520px;width:14px;height:14px;border-radius:4px;background:#007616"></div>
<svg style="left:304px;top:520px" width="14" height="14"><path d="M3.6 6.8 L5.6 9.1 L10.2 4.4" fill="none" stroke="#f4f4f5" stroke-width="1.05" stroke-linecap="round" stroke-linejoin="round"/></svg>
<div class="b" style="left:322px;top:520px;width:14px;height:14px;border-radius:4px;background:#007616"></div>
<svg style="left:322px;top:520px" width="14" height="14"><path d="M3.6 6.8 L5.6 9.1 L10.2 4.4" fill="none" stroke="#f4f4f5" stroke-width="1.05" stroke-linecap="round" stroke-linejoin="round"/></svg>
<div class="b" style="left:340px;top:520px;width:14px;height:14px;border-radius:4px;background:#007616"></div>
<svg style="left:340px;top:520px" width="14" height="14"><path d="M3.6 6.8 L5.6 9.1 L10.2 4.4" fill="none" stroke="#f4f4f5" stroke-width="1.05" stroke-linecap="round" stroke-linejoin="round"/></svg>
<div class="b" style="left:358px;top:520px;width:14px;height:14px;border-radius:4px;background:#007616"></div>
<svg style="left:358px;top:520px" width="14" height="14"><path d="M3.6 6.8 L5.6 9.1 L10.2 4.4" fill="none" stroke="#f4f4f5" stroke-width="1.05" stroke-linecap="round" stroke-linejoin="round"/></svg>
<div class="b" style="left:376px;top:520px;width:14px;height:14px;border-radius:4px;background:#007616"></div>
<svg style="left:376px;top:520px" width="14" height="14"><path d="M3.6 6.8 L5.6 9.1 L10.2 4.4" fill="none" stroke="#f4f4f5" stroke-width="1.05" stroke-linecap="round" stroke-linejoin="round"/></svg>
<div class="b" style="left:406.8px;top:520px;width:133.59999999999997px;height:14px;background:#2f731f;border-radius:1px;"></div>
<div class="b" style="left:92px;top:556px;width:210px;height:1px;background:#212e3d;"></div>
<div class="b" style="left:392px;top:556px;width:592px;height:1px;background:#1e2735;"></div>
<div class="t" style="left:112px;top:541.40px;font-size:14px;line-height:14px;color:#e4e4e7;letter-spacing:0.37px;">task_1</div>
<div class="b" style="left:304px;top:540px;width:14px;height:14px;border-radius:4px;background:#007616"></div>
<svg style="left:304px;top:540px" width="14" height="14"><path d="M3.6 6.8 L5.6 9.1 L10.2 4.4" fill="none" stroke="#f4f4f5" stroke-width="1.05" stroke-linecap="round" stroke-linejoin="round"/></svg>
<div class="b" style="left:322px;top:540px;width:14px;height:14px;border-radius:4px;background:#007616"></div>
<svg style="left:322px;top:540px" width="14" height="14"><path d="M3.6 6.8 L5.6 9.1 L10.2 4.4" fill="none" stroke="#f4f4f5" stroke-width="1.05" stroke-linecap="round" stroke-linejoin="round"/></svg>
<div class="b" style="left:340px;top:540px;width:14px;height:14px;border-radius:4px;background:#007616"></div>
<svg style="left:340px;top:540px" width="14" height="14"><path d="M3.6 6.8 L5.6 9.1 L10.2 4.4" fill="none" stroke="#f4f4f5" stroke-width="1.05" stroke-linecap="round" stroke-linejoin="round"/></svg>
<div class="b" style="left:358px;top:540px;width:14px;height:14px;border-radius:4px;background:#007616"></div>
<svg style="left:358px;top:540px" width="14" height="14"><path d="M3.6 6.8 L5.6 9.1 L10.2 4.4" fill="none" stroke="#f4f4f5" stroke-width="1.05" stroke-linecap="round" stroke-linejoin="round"/></svg>
<div class="b" style="left:376px;top:540px;width:14px;height:14px;border-radius:4px;background:#007616"></div>
<svg style="left:376px;top:540px" width="14" height="14"><path d="M3.6 6.8 L5.6 9.1 L10.2 4.4" fill="none" stroke="#f4f4f5" stroke-width="1.05" stroke-linecap="round" stroke-linejoin="round"/></svg>
<div class="b" style="left:406.8px;top:540px;width:10.0px;height:14px;background:#2f731f;border-radius:1px;"></div>
<div class="b" style="left:92px;top:576px;width:210px;height:1px;background:#212e3d;"></div>
<div class="b" style="left:392px;top:576px;width:592px;height:1px;background:#1e2735;"></div>
<div class="t" style="left:112px;top:561.40px;font-size:14px;line-height:14px;color:#e4e4e7;letter-spacing:0.37px;">task_2</div>
<div class="b" style="left:304px;top:560px;width:14px;height:14px;border-radius:4px;background:#007616"></div>
<svg style="left:304px;top:560px" width="14" height="14"><path d="M3.6 6.8 L5.6 9.1 L10.2 4.4" fill="none" stroke="#f4f4f5" stroke-width="1.05" stroke-linecap="round" stroke-linejoin="round"/></svg>
<div class="b" style="left:322px;top:560px;width:14px;height:14px;border-radius:4px;background:#007616"></div>
<svg style="left:322px;top:560px" width="14" height="14"><path d="M3.6 6.8 L5.6 9.1 L10.2 4.4" fill="none" stroke="#f4f4f5" stroke-width="1.05" stroke-linecap="round" stroke-linejoin="round"/></svg>
<div class="b" style="left:340px;top:560px;width:14px;height:14px;border-radius:4px;background:#007616"></div>
<svg style="left:340px;top:560px" width="14" height="14"><path d="M3.6 6.8 L5.6 9.1 L10.2 4.4" fill="none" stroke="#f4f4f5" stroke-width="1.05" stroke-linecap="round" stroke-linejoin="round"/></svg>
<div class="b" style="left:358px;top:560px;width:14px;height:14px;border-radius:4px;background:#007616"></div>
<svg style="left:358px;top:560px" width="14" height="14"><path d="M3.6 6.8 L5.6 9.1 L10.2 4.4" fill="none" stroke="#f4f4f5" stroke-width="1.05" stroke-linecap="round" stroke-linejoin="round"/></svg>
<div class="b" style="left:376px;top:560px;width:14px;height:14px;border-radius:4px;background:#007616"></div>
<svg style="left:376px;top:560px" width="14" height="14"><path d="M3.6 6.8 L5.6 9.1 L10.2 4.4" fill="none" stroke="#f4f4f5" stroke-width="1.05" stroke-linecap="round" stroke-linejoin="round"/></svg>
<div class="b" style="left:540.4px;top:560px;width:44.39999999999998px;height:14px;background:#2f731f;border-radius:1px;"></div>
<div class="b" style="left:92px;top:596px;width:210px;height:1px;background:#212e3d;"></div>
<div class="b" style="left:392px;top:596px;width:592px;height:1px;background:#1e2735;"></div>
<div class="t" style="left:112px;top:581.40px;font-size:14px;line-height:14px;color:#e4e4e7;letter-spacing:0.37px;">task_3</div>
<div class="b" style="left:304px;top:580px;width:14px;height:14px;border-radius:4px;background:#007616"></div>
<svg style="left:304px;top:580px" width="14" height="14"><path d="M3.6 6.8 L5.6 9.1 L10.2 4.4" fill="none" stroke="#f4f4f5" stroke-width="1.05" stroke-linecap="round" stroke-linejoin="round"/></svg>
<div class="b" style="left:322px;top:580px;width:14px;height:14px;border-radius:4px;background:#007616"></div>
<svg style="left:322px;top:580px" width="14" height="14"><path d="M3.6 6.8 L5.6 9.1 L10.2 4.4" fill="none" stroke="#f4f4f5" stroke-width="1.05" stroke-linecap="round" stroke-linejoin="round"/></svg>
<div class="b" style="left:340px;top:580px;width:14px;height:14px;border-radius:4px;background:#007616"></div>
<svg style="left:340px;top:580px" width="14" height="14"><path d="M3.6 6.8 L5.6 9.1 L10.2 4.4" fill="none" stroke="#f4f4f5" stroke-width="1.05" stroke-linecap="round" stroke-linejoin="round"/></svg>
<div class="b" style="left:358px;top:580px;width:14px;height:14px;border-radius:4px;background:#007616"></div>
<svg style="left:358px;top:580px" width="14" height="14"><path d="M3.6 6.8 L5.6 9.1 L10.2 4.4" fill="none" stroke="#f4f4f5" stroke-width="1.05" stroke-linecap="round" stroke-linejoin="round"/></svg>
<div class="b" style="left:376px;top:580px;width:14px;height:14px;border-radius:4px;background:#007616"></div>
<svg style="left:376px;top:580px" width="14" height="14"><path d="M3.6 6.8 L5.6 9.1 L10.2 4.4" fill="none" stroke="#f4f4f5" stroke-width="1.05" stroke-linecap="round" stroke-linejoin="round"/></svg>
<div class="b" style="left:406.8px;top:580px;width:10.0px;height:14px;background:#2f731f;border-radius:1px;"></div>
<div class="b" style="left:92px;top:616px;width:210px;height:1px;background:#212e3d;"></div>
<div class="b" style="left:392px;top:616px;width:592px;height:1px;background:#1e2735;"></div>
<div class="t" style="left:112px;top:601.40px;font-size:14px;line-height:14px;color:#e4e4e7;letter-spacing:0.37px;">get_entry_group</div>
<div class="b" style="left:304px;top:600px;width:14px;height:14px;border-radius:4px;background:#007616"></div>
<svg style="left:304px;top:600px" width="14" height="14"><path d="M3.6 6.8 L5.6 9.1 L10.2 4.4" fill="none" stroke="#f4f4f5" stroke-width="1.05" stroke-linecap="round" stroke-linejoin="round"/></svg>
<div class="b" style="left:322px;top:600px;width:14px;height:14px;border-radius:4px;background:#007616"></div>
<svg style="left:322px;top:600px" width="14" height="14"><path d="M3.6 6.8 L5.6 9.1 L10.2 4.4" fill="none" stroke="#f4f4f5" stroke-width="1.05" stroke-linecap="round" stroke-linejoin="round"/></svg>
<div class="b" style="left:340px;top:600px;width:14px;height:14px;border-radius:4px;background:#007616"></div>
<svg style="left:340px;top:600px" width="14" height="14"><path d="M3.6 6.8 L5.6 9.1 L10.2 4.4" fill="none" stroke="#f4f4f5" stroke-width="1.05" stroke-linecap="round" stroke-linejoin="round"/></svg>
<div class="b" style="left:358px;top:600px;width:14px;height:14px;border-radius:4px;background:#007616"></div>
<svg style="left:358px;top:600px" width="14" height="14"><path d="M3.6 6.8 L5.6 9.1 L10.2 4.4" fill="none" stroke="#f4f4f5" stroke-width="1.05" stroke-linecap="round" stroke-linejoin="round"/></svg>
<div class="b" style="left:376px;top:600px;width:14px;height:14px;border-radius:4px;background:#007616"></div>
<svg style="left:376px;top:600px" width="14" height="14"><path d="M3.6 6.8 L5.6 9.1 L10.2 4.4" fill="none" stroke="#f4f4f5" stroke-width="1.05" stroke-linecap="round" stroke-linejoin="round"/></svg>
<div class="b" style="left:599.7px;top:600px;width:73.89999999999998px;height:14px;background:#2f731f;border-radius:1px;"></div>
<div class="b" style="left:92px;top:636px;width:210px;height:1px;background:#212e3d;"></div>
<div class="b" style="left:392px;top:636px;width:592px;height:1px;background:#1e2735;"></div>
<div class="t" style="left:112px;top:621.40px;font-size:14px;line-height:14px;color:#e4e4e7;letter-spacing:0.37px;">get_entry_group_result</div>
<div class="b" style="left:304px;top:620px;width:14px;height:14px;border-radius:4px;background:#007616"></div>
<svg style="left:304px;top:620px" width="14" height="14"><path d="M3.6 6.8 L5.6 9.1 L10.2 4.4" fill="none" stroke="#f4f4f5" stroke-width="1.05" stroke-linecap="round" stroke-linejoin="round"/></svg>
<div class="b" style="left:322px;top:620px;width:14px;height:14px;border-radius:4px;background:#007616"></div>
<svg style="left:322px;top:620px" width="14" height="14"><path d="M3.6 6.8 L5.6 9.1 L10.2 4.4" fill="none" stroke="#f4f4f5" stroke-width="1.05" stroke-linecap="round" stroke-linejoin="round"/></svg>
<div class="b" style="left:340px;top:620px;width:14px;height:14px;border-radius:4px;background:#007616"></div>
<svg style="left:340px;top:620px" width="14" height="14"><path d="M3.6 6.8 L5.6 9.1 L10.2 4.4" fill="none" stroke="#f4f4f5" stroke-width="1.05" stroke-linecap="round" stroke-linejoin="round"/></svg>
<div class="b" style="left:358px;top:620px;width:14px;height:14px;border-radius:4px;background:#007616"></div>
<svg style="left:358px;top:620px" width="14" height="14"><path d="M3.6 6.8 L5.6 9.1 L10.2 4.4" fill="none" stroke="#f4f4f5" stroke-width="1.05" stroke-linecap="round" stroke-linejoin="round"/></svg>
<div class="b" style="left:376px;top:620px;width:14px;height:14px;border-radius:4px;background:#007616"></div>
<svg style="left:376px;top:620px" width="14" height="14"><path d="M3.6 6.8 L5.6 9.1 L10.2 4.4" fill="none" stroke="#f4f4f5" stroke-width="1.05" stroke-linecap="round" stroke-linejoin="round"/></svg>
<div class="b" style="left:673.6px;top:620px;width:44.69999999999993px;height:14px;background:#2f731f;border-radius:1px;"></div>
<div class="b" style="left:92px;top:656px;width:210px;height:1px;background:#212e3d;"></div>
<div class="b" style="left:392px;top:656px;width:592px;height:1px;background:#1e2735;"></div>
<div class="t" style="left:112px;top:641.40px;font-size:14px;line-height:14px;color:#e4e4e7;letter-spacing:0.37px;">get_entry</div>
<div class="b" style="left:304px;top:640px;width:14px;height:14px;border-radius:4px;background:#007616"></div>
<svg style="left:304px;top:640px" width="14" height="14"><path d="M3.6 6.8 L5.6 9.1 L10.2 4.4" fill="none" stroke="#f4f4f5" stroke-width="1.05" stroke-linecap="round" stroke-linejoin="round"/></svg>
<div class="b" style="left:322px;top:640px;width:14px;height:14px;border-radius:4px;background:#007616"></div>
<svg style="left:322px;top:640px" width="14" height="14"><path d="M3.6 6.8 L5.6 9.1 L10.2 4.4" fill="none" stroke="#f4f4f5" stroke-width="1.05" stroke-linecap="round" stroke-linejoin="round"/></svg>
<div class="b" style="left:340px;top:640px;width:14px;height:14px;border-radius:4px;background:#007616"></div>
<svg style="left:340px;top:640px" width="14" height="14"><path d="M3.6 6.8 L5.6 9.1 L10.2 4.4" fill="none" stroke="#f4f4f5" stroke-width="1.05" stroke-linecap="round" stroke-linejoin="round"/></svg>
<div class="b" style="left:358px;top:640px;width:14px;height:14px;border-radius:4px;background:#007616"></div>
<svg style="left:358px;top:640px" width="14" height="14"><path d="M3.6 6.8 L5.6 9.1 L10.2 4.4" fill="none" stroke="#f4f4f5" stroke-width="1.05" stroke-linecap="round" stroke-linejoin="round"/></svg>
<div class="b" style="left:376px;top:640px;width:14px;height:14px;border-radius:4px;background:#007616"></div>
<svg style="left:376px;top:640px" width="14" height="14"><path d="M3.6 6.8 L5.6 9.1 L10.2 4.4" fill="none" stroke="#f4f4f5" stroke-width="1.05" stroke-linecap="round" stroke-linejoin="round"/></svg>
<div class="b" style="left:733.2px;top:640px;width:44.39999999999998px;height:14px;background:#2f731f;border-radius:1px;"></div>
<div class="b" style="left:92px;top:676px;width:210px;height:1px;background:#212e3d;"></div>
<div class="b" style="left:392px;top:676px;width:592px;height:1px;background:#1e2735;"></div>
<div class="t" style="left:112px;top:661.40px;font-size:14px;line-height:14px;color:#e4e4e7;letter-spacing:0.37px;">get_tag_template</div>
<div class="b" style="left:304px;top:660px;width:14px;height:14px;border-radius:4px;background:#007616"></div>
<svg style="left:304px;top:660px" width="14" height="14"><path d="M3.6 6.8 L5.6 9.1 L10.2 4.4" fill="none" stroke="#f4f4f5" stroke-width="1.05" stroke-linecap="round" stroke-linejoin="round"/></svg>
<div class="b" style="left:322px;top:660px;width:14px;height:14px;border-radius:4px;background:#007616"></div>
<svg style="left:322px;top:660px" width="14" height="14"><path d="M3.6 6.8 L5.6 9.1 L10.2 4.4" fill="none" stroke="#f4f4f5" stroke-width="1.05" stroke-linecap="round" stroke-linejoin="round"/></svg>
<div class="b" style="left:340px;top:660px;width:14px;height:14px;border-radius:4px;background:#007616"></div>
<svg style="left:340px;top:660px" width="14" height="14"><path d="M3.6 6.8 L5.6 9.1 L10.2 4.4" fill="none" stroke="#f4f4f5" stroke-width="1.05" stroke-linecap="round" stroke-linejoin="round"/></svg>
<div class="b" style="left:358px;top:660px;width:14px;height:14px;border-radius:4px;background:#007616"></div>
<svg style="left:358px;top:660px" width="14" height="14"><path d="M3.6 6.8 L5.6 9.1 L10.2 4.4" fill="none" stroke="#f4f4f5" stroke-width="1.05" stroke-linecap="round" stroke-linejoin="round"/></svg>
<div class="b" style="left:376px;top:660px;width:14px;height:14px;border-radius:4px;background:#007616"></div>
<svg style="left:376px;top:660px" width="14" height="14"><path d="M3.6 6.8 L5.6 9.1 L10.2 4.4" fill="none" stroke="#f4f4f5" stroke-width="1.05" stroke-linecap="round" stroke-linejoin="round"/></svg>
<div class="b" style="left:792.5px;top:660px;width:29.5px;height:14px;background:#2f731f;border-radius:1px;"></div>
<div class="b" style="left:92px;top:696px;width:210px;height:1px;background:#212e3d;"></div>
<div class="b" style="left:392px;top:696px;width:592px;height:1px;background:#1e2735;"></div>
<div class="t" style="left:112px;top:681.40px;font-size:14px;line-height:14px;color:#e4e4e7;letter-spacing:0.37px;">get_tag_template_result</div>
<div class="b" style="left:304px;top:680px;width:14px;height:14px;border-radius:4px;background:#007616"></div>
<svg style="left:304px;top:680px" width="14" height="14"><path d="M3.6 6.8 L5.6 9.1 L10.2 4.4" fill="none" stroke="#f4f4f5" stroke-width="1.05" stroke-linecap="round" stroke-linejoin="round"/></svg>
<div class="b" style="left:322px;top:680px;width:14px;height:14px;border-radius:4px;background:#007616"></div>
<svg style="left:322px;top:680px" width="14" height="14"><path d="M3.6 6.8 L5.6 9.1 L10.2 4.4" fill="none" stroke="#f4f4f5" stroke-width="1.05" stroke-linecap="round" stroke-linejoin="round"/></svg>
<div class="b" style="left:340px;top:680px;width:14px;height:14px;border-radius:4px;background:#007616"></div>
<svg style="left:340px;top:680px" width="14" height="14"><path d="M3.6 6.8 L5.6 9.1 L10.2 4.4" fill="none" stroke="#f4f4f5" stroke-width="1.05" stroke-linecap="round" stroke-linejoin="round"/></svg>
<div class="b" style="left:358px;top:680px;width:14px;height:14px;border-radius:4px;background:#007616"></div>
<svg style="left:358px;top:680px" width="14" height="14"><path d="M3.6 6.8 L5.6 9.1 L10.2 4.4" fill="none" stroke="#f4f4f5" stroke-width="1.05" stroke-linecap="round" stroke-linejoin="round"/></svg>
<div class="b" style="left:376px;top:680px;width:14px;height:14px;border-radius:4px;background:#007616"></div>
<svg style="left:376px;top:680px" width="14" height="14"><path d="M3.6 6.8 L5.6 9.1 L10.2 4.4" fill="none" stroke="#f4f4f5" stroke-width="1.05" stroke-linecap="round" stroke-linejoin="round"/></svg>
<div class="b" style="left:792.5px;top:680px;width:29.5px;height:14px;background:#2f731f;border-radius:1px;"></div>
<div class="t" style="left:392.0px;top:213px;font-size:11.5px;line-height:12px;color:#8f959e;transform:rotate(-7.5deg);transform-origin:0 100%">10:53:48</div>
<div class="t" style="left:466.2px;top:213px;font-size:11.5px;line-height:12px;color:#8f959e;transform:rotate(-7.5deg);transform-origin:0 100%">10:53:53</div>
<div class="t" style="left:540.4px;top:213px;font-size:11.5px;line-height:12px;color:#8f959e;transform:rotate(-7.5deg);transform-origin:0 100%">10:53:58</div>
<div class="t" style="left:614.6px;top:213px;font-size:11.5px;line-height:12px;color:#8f959e;transform:rotate(-7.5deg);transform-origin:0 100%">10:54:03</div>
<div class="t" style="left:688.8px;top:213px;font-size:11.5px;line-height:12px;color:#8f959e;transform:rotate(-7.5deg);transform-origin:0 100%">10:54:08</div>
<div class="t" style="left:763.0px;top:213px;font-size:11.5px;line-height:12px;color:#8f959e;transform:rotate(-7.5deg);transform-origin:0 100%">10:54:13</div>
<div class="t" style="left:837.2px;top:213px;font-size:11.5px;line-height:12px;color:#8f959e;transform:rotate(-7.5deg);transform-origin:0 100%">10:54:18</div>
<div class="t" style="left:911.4px;top:213px;font-size:11.5px;line-height:12px;color:#8f959e;transform:rotate(-7.5deg);transform-origin:0 100%">10:54:23</div>
<div class="b" style="left:1008px;top:57px;width:2px;height:1061px;background:#2a3d55;"></div>
<div class="b" style="left:1010px;top:700px;width:19px;height:24px;border-radius:0 12px 12px 0;background:#7b8ea6;box-shadow:0 2px 6px rgba(0,0,0,0.5);z-index:5"></div>
<svg style="left:1010px;top:700px;z-index:6" width="19" height="24"><path d="M4.5 6.8 L9 11.8 L4.5 16.8" fill="none" stroke="#fff" stroke-width="1.9" stroke-linecap="round" stroke-linejoin="round"/></svg>
<div class="b" style="left:1010px;top:57px;width:900px;height:150px;border:1px solid #28374a;border-radius:6px;"></div>
<svg style="left:1021px;top:71px" width="16" height="19" viewBox="0 0 16 19" fill="none" stroke="#fff" stroke-width="1.6" stroke-linejoin="round" stroke-linecap="round"><path d="M2 1.5 H9.5 L14 6 V15.8 Q14 16.8 13 16.8 H3 Q2 16.8 2 15.8 Z"/><path d="M9.5 1.5 V6 H14"/><path d="M5.2 11.2 L7.2 13.2 L11 9.5"/></svg>
<div class="t" style="left:1048px;top:71.00px;font-size:18px;line-height:18px;color:#fafafa;letter-spacing:0.57px;-webkit-text-stroke:0.7px #fafafa;">section_2.inner_section_2.inner_section_3.print_the_context</div>
<div class="t" style="left:1575.7px;top:71.00px;font-size:18px;line-height:18px;color:#fafafa;letter-spacing:0.93px;-webkit-text-stroke:0.7px #fafafa;">2025-09-24 10:54:22</div>
<div class="b" style="left:1769px;top:68px;width:90px;height:24px;border-radius:12px;background:#007616"></div>
<svg style="left:1777px;top:74px" width="14" height="12"><path d="M2 6.5 L5 9.3 L11.5 2.7" fill="none" stroke="#fff" stroke-width="1.5" stroke-linecap="round" stroke-linejoin="round"/></svg>
<div class="t" style="left:1796px;top:72.88px;font-size:14.5px;line-height:14.5px;color:#fff;">Success</div>
<div class="b" style="left:1019px;top:94px;width:132.5px;height:40px;border:1px solid #1f2c3a;border-radius:5px;"></div>
<div class="b" style="left:1156.5px;top:94px;width:189.79999999999995px;height:40px;border:1px solid #1f2c3a;border-radius:5px;"></div>
<div class="b" style="left:1351.7px;top:94px;width:219.5px;height:40px;border:1px solid #1f2c3a;border-radius:5px;"></div>
<svg style="left:1038px;top:106px" width="16" height="16" fill="none" stroke="#d4d4d8" stroke-width="1.3" stroke-linejoin="round"><path d="M1 1 H15 V10 L10 15 H1 Z"/><path d="M15 10 H10 V15"/></svg>
<div class="t" style="left:1065px;top:107.00px;font-size:14px;line-height:14px;color:#e4e4e7;letter-spacing:0.25px;">Add a note</div>
<svg style="left:1175px;top:106px" width="16" height="16" viewBox="0 0 16 16" fill="none" stroke="#e4e4e7" stroke-width="1.6" stroke-linecap="round" stroke-linejoin="round"><path d="M13.5 8 A5.5 5.5 0 1 1 11.5 3.8"/><path d="M12.5 1 V4.5 H9"/></svg>
<div class="t" style="left:1201.5px;top:107.00px;font-size:14px;line-height:14px;color:#e4e4e7;letter-spacing:0.28px;">Clear Task Instance</div>
<div class="t" style="left:1368px;top:107.00px;font-size:14px;line-height:14px;color:#e4e4e7;letter-spacing:0.35px;">Mark Task Instance as...</div>
<svg style="left:1539px;top:110px" width="12" height="8"><path d="M1 1.5 H11 L6 6.5Z" fill="#e4e4e7"/></svg>
<div class="t" style="left:1019px;top:145.88px;font-size:12.5px;line-height:12.5px;color:#9ca3af;letter-spacing:0.33px;-webkit-text-stroke:0.55px #9ca3af;">Operator</div>
<div class="t" style="left:1301.4px;top:145.88px;font-size:12.5px;line-height:12.5px;color:#9ca3af;letter-spacing:0.33px;-webkit-text-stroke:0.55px #9ca3af;">Start Date</div>
<div class="t" style="left:1627.8px;top:145.88px;font-size:12.5px;line-height:12.5px;color:#9ca3af;letter-spacing:0.33px;-webkit-text-stroke:0.55px #9ca3af;">End Date</div>
<div class="t" style="left:1019px;top:170.70px;font-size:16px;line-height:16px;color:#e4e4e7;letter-spacing:0.2px;">PythonOperator</div>
<div class="t" style="left:1301.4px;top:170.70px;font-size:16px;line-height:16px;color:#e4e4e7;letter-spacing:0.55px;">2025-09-24 10:54:22</div>
<div class="t" style="left:1627.8px;top:170.70px;font-size:16px;line-height:16px;color:#e4e4e7;letter-spacing:0.55px;">2025-09-24 10:54:25</div>
<div class="b" style="left:1010px;top:251px;width:861px;height:1px;background:#28384c;"></div>
<div class="b" style="left:1010px;top:249.5px;width:69px;height:3px;background:#5aa2f5;"></div>
<div class="t" style="left:1026.8px;top:225.40px;font-size:16px;line-height:16px;color:#fafafa;letter-spacing:0.5px;-webkit-text-stroke:0.75px #fafafa;">Logs</div>
<div class="t" style="left:1096.2px;top:225.40px;font-size:16px;line-height:16px;color:#a8afba;letter-spacing:0.5px;-webkit-text-stroke:0.75px #a8afba;">Rendered Templates</div>
<div class="t" style="left:1287.2px;top:225.40px;font-size:16px;line-height:16px;color:#a8afba;letter-spacing:0.5px;-webkit-text-stroke:0.75px #a8afba;">XCom</div>
<div class="t" style="left:1365.8px;top:225.40px;font-size:16px;line-height:16px;color:#a8afba;letter-spacing:0.5px;-webkit-text-stroke:0.75px #a8afba;">Asset Events</div>
<div class="t" style="left:1498px;top:225.40px;font-size:16px;line-height:16px;color:#a8afba;letter-spacing:0.5px;-webkit-text-stroke:0.75px #a8afba;">Audit Log</div>
<div class="t" style="left:1603.8px;top:225.40px;font-size:16px;line-height:16px;color:#a8afba;letter-spacing:0.5px;-webkit-text-stroke:0.75px #a8afba;">Code</div>
<div class="t" style="left:1676px;top:225.40px;font-size:16px;line-height:16px;color:#a8afba;letter-spacing:0.5px;-webkit-text-stroke:0.75px #a8afba;">Details</div>
<div class="b" style="left:1026px;top:268px;width:250px;height:40px;border:1px solid #1f2c3a;border-radius:5px;"></div>
<div class="t" style="left:1039.5px;top:281.00px;font-size:14px;line-height:14px;color:#e4e4e7;letter-spacing:0.2px;">All Log Levels</div>
<svg style="left:1250px;top:284px" width="12" height="8"><path d="M1.5 1.5 L6 6 L10.5 1.5" fill="none" stroke="#d4d4d8" stroke-width="1.5" stroke-linecap="round" stroke-linejoin="round"/></svg>
<div class="b" style="left:1529px;top:268px;width:250px;height:40px;border:1px solid #1f2c3a;border-radius:5px;"></div>
<div class="t" style="left:1542px;top:281.00px;font-size:14px;line-height:14px;color:#a1a1aa;letter-spacing:0.2px;">All Sources</div>
<svg style="left:1753px;top:284px" width="12" height="8"><path d="M1.5 1.5 L6 6 L10.5 1.5" fill="none" stroke="#d4d4d8" stroke-width="1.5" stroke-linecap="round" stroke-linejoin="round"/></svg>
<div class="b" style="left:1026px;top:314px;width:845px;height:804px;background:#09111f;border-radius:4px 0 0 0;"></div>
<svg style="left:1026px;top:317px" width="8" height="10"><path d="M0.5 0.5 L7.5 5 L0.5 9.5Z" fill="#e4e4e7"/></svg>
<div class="t" style="left:1038.8px;top:317.4px;font-family:'Liberation Mono', monospace;font-size:12px;line-height:12px;letter-spacing:0.02px;color:#8fb8e8">Log message source details sources=[&quot;/root/airflow/logs/dag_id=nested_groups/run_id=scheduled__2025–09–24T00:00:00+00:00/task_id=section_2.inner_section_2.inner_section_3.print_the_context/attempt=1.log&quot;]</div>
<div class="b" style="left:1231px;top:337.8px;width:29px;height:18px;background:#285a2e;border-radius:3px;"></div>
<div class="t" style="left:1028px;width:29px;text-align:right;top:341.8px;font-family:'Liberation Mono', monospace;font-size:12px;line-height:12px;color:#e4e4e7">2</div>
<div class="t" style="left:1073px;top:341.8px;font-family:'Liberation Mono', monospace;font-size:12px;line-height:12px;letter-spacing:0.02px;color:#e4e4e7">[2025–09–24 10:54:25] <span style="color:#bfeebf">INFO</span> – DAG bundles loaded: dags–folder, example_dags</div>
<div class="b" style="left:1231px;top:355.8px;width:29px;height:18px;background:#285a2e;border-radius:3px;"></div>
<div class="t" style="left:1028px;width:29px;text-align:right;top:359.8px;font-family:'Liberation Mono', monospace;font-size:12px;line-height:12px;color:#e4e4e7">3</div>
<div class="t" style="left:1073px;top:359.8px;font-family:'Liberation Mono', monospace;font-size:12px;line-height:12px;letter-spacing:0.02px;color:#e4e4e7">[2025–09–24 10:54:25] <span style="color:#bfeebf">INFO</span> – Filling up the DagBag from /files/dags/nested_groups.py</div>
<div class="b" style="left:1231px;top:373.8px;width:29px;height:18px;background:#285a2e;border-radius:3px;"></div>
<div class="t" style="left:1028px;width:29px;text-align:right;top:377.8px;font-family:'Liberation Mono', monospace;font-size:12px;line-height:12px;color:#e4e4e7">4</div>
<div class="t" style="left:1073px;top:377.8px;font-family:'Liberation Mono', monospace;font-size:12px;line-height:12px;letter-spacing:0.02px;color:#e4e4e7">[2025–09–24 10:54:25] <span style="color:#bfeebf">INFO</span> – Task instance is in running state</div>
<div class="b" style="left:1231px;top:391.8px;width:29px;height:18px;background:#285a2e;border-radius:3px;"></div>
<div class="t" style="left:1028px;width:29px;text-align:right;top:395.8px;font-family:'Liberation Mono', monospace;font-size:12px;line-height:12px;color:#e4e4e7">5</div>
<div class="t" style="left:1073px;top:395.8px;font-family:'Liberation Mono', monospace;font-size:12px;line-height:12px;letter-spacing:0.02px;color:#e4e4e7">[2025–09–24 10:54:25] <span style="color:#bfeebf">INFO</span> –  Previous state of the Task instance: TaskInstanceState.QUEUED</div>
<div class="b" style="left:1231px;top:409.8px;width:29px;height:18px;background:#285a2e;border-radius:3px;"></div>
<div class="t" style="left:1028px;width:29px;text-align:right;top:413.8px;font-family:'Liberation Mono', monospace;font-size:12px;line-height:12px;color:#e4e4e7">6</div>
<div class="t" style="left:1073px;top:413.8px;font-family:'Liberation Mono', monospace;font-size:12px;line-height:12px;letter-spacing:0.02px;color:#e4e4e7">[2025–09–24 10:54:25] <span style="color:#bfeebf">INFO</span> – Current task name:section_2.inner_section_2.inner_section_3.print_the_context</div>
<div class="b" style="left:1231px;top:427.8px;width:29px;height:18px;background:#285a2e;border-radius:3px;"></div>
<div class="t" style="left:1028px;width:29px;text-align:right;top:431.8px;font-family:'Liberation Mono', monospace;font-size:12px;line-height:12px;color:#e4e4e7">7</div>
<div class="t" style="left:1073px;top:431.8px;font-family:'Liberation Mono', monospace;font-size:12px;line-height:12px;letter-spacing:0.02px;color:#e4e4e7">[2025–09–24 10:54:25] <span style="color:#bfeebf">INFO</span> – Dag name:nested_groups</div>
<div class="b" style="left:1231px;top:445.8px;width:29px;height:18px;background:#285a2e;border-radius:3px;"></div>
<div class="t" style="left:1028px;width:29px;text-align:right;top:449.8px;font-family:'Liberation Mono', monospace;font-size:12px;line-height:12px;color:#e4e4e7">8</div>
<div class="t" style="left:1073px;top:449.8px;font-family:'Liberation Mono', monospace;font-size:12px;line-height:12px;letter-spacing:0.02px;color:#e4e4e7">[2025–09–24 10:54:25] <span style="color:#bfeebf">INFO</span> – {&#x27;conn&#x27;: &lt;ConnectionAccessor (dynamic access)&gt;,</div>
<div class="b" style="left:1231px;top:463.8px;width:29px;height:18px;background:#285a2e;border-radius:3px;"></div>
<div class="t" style="left:1028px;width:29px;text-align:right;top:467.8px;font-family:'Liberation Mono', monospace;font-size:12px;line-height:12px;color:#e4e4e7">9</div>
<div class="t" style="left:1073px;top:467.8px;font-family:'Liberation Mono', monospace;font-size:12px;line-height:12px;letter-spacing:0.02px;color:#e4e4e7">[2025–09–24 10:54:25] <span style="color:#bfeebf">INFO</span> –  &#x27;dag&#x27;: &lt;DAG: nested_groups&gt;,</div>
<div class="b" style="left:1231px;top:481.8px;width:29px;height:18px;background:#285a2e;border-radius:3px;"></div>
<div class="t" style="left:1028px;width:29px;text-align:right;top:485.8px;font-family:'Liberation Mono', monospace;font-size:12px;line-height:12px;color:#e4e4e7">10</div>
<div class="t" style="left:1073px;top:485.8px;font-family:'Liberation Mono', monospace;font-size:12px;line-height:12px;letter-spacing:0.02px;color:#e4e4e7">[2025–09–24 10:54:25] <span style="color:#bfeebf">INFO</span> –  &#x27;dag_run&#x27;: DagRun(dag_id=&#x27;nested_groups&#x27;, run_id=&#x27;scheduled__2025–09–24T00:00:00+00:00&#x27;, run_after=2025–09–24 00:00:00+00:00)</div>
<div class="b" style="left:1231px;top:499.79999999999995px;width:29px;height:18px;background:#285a2e;border-radius:3px;"></div>
<div class="t" style="left:1028px;width:29px;text-align:right;top:503.79999999999995px;font-family:'Liberation Mono', monospace;font-size:12px;line-height:12px;color:#e4e4e7">11</div>
<div class="t" style="left:1073px;top:503.79999999999995px;font-family:'Liberation Mono', monospace;font-size:12px;line-height:12px;letter-spacing:0.02px;color:#e4e4e7">[2025–09–24 10:54:25] <span style="color:#bfeebf">INFO</span> –  &#x27;data_interval_end&#x27;: DateTime(2025, 9, 24, 0, 0, 0, tzinfo=Timezone(&#x27;UTC&#x27;)),</div>
<div class="b" style="left:1231px;top:517.8px;width:29px;height:18px;background:#285a2e;border-radius:3px;"></div>
<div class="t" style="left:1028px;width:29px;text-align:right;top:521.8px;font-family:'Liberation Mono', monospace;font-size:12px;line-height:12px;color:#e4e4e7">12</div>
<div class="t" style="left:1073px;top:521.8px;font-family:'Liberation Mono', monospace;font-size:12px;line-height:12px;letter-spacing:0.02px;color:#e4e4e7">[2025–09–24 10:54:25] <span style="color:#bfeebf">INFO</span> –  &#x27;data_interval_start&#x27;: DateTime(2025, 9, 24, 0, 0, 0, tzinfo=Timezone(&#x27;UTC&#x27;)),</div>
<div class="b" style="left:1231px;top:535.8px;width:29px;height:18px;background:#285a2e;border-radius:3px;"></div>
<div class="t" style="left:1028px;width:29px;text-align:right;top:539.8px;font-family:'Liberation Mono', monospace;font-size:12px;line-height:12px;color:#e4e4e7">13</div>
<div class="t" style="left:1073px;top:539.8px;font-family:'Liberation Mono', monospace;font-size:12px;line-height:12px;letter-spacing:0.02px;color:#e4e4e7">[2025–09–24 10:54:25] <span style="color:#bfeebf">INFO</span> –  &#x27;ds_nodash&#x27;: &#x27;20250924&#x27;,</div>
<div class="b" style="left:1231px;top:553.8px;width:29px;height:18px;background:#285a2e;border-radius:3px;"></div>
<div class="t" style="left:1028px;width:29px;text-align:right;top:557.8px;font-family:'Liberation Mono', monospace;font-size:12px;line-height:12px;color:#e4e4e7">14</div>
<div class="t" style="left:1073px;top:557.8px;font-family:'Liberation Mono', monospace;font-size:12px;line-height:12px;letter-spacing:0.02px;color:#e4e4e7">[2025–09–24 10:54:25] <span style="color:#bfeebf">INFO</span> –  &#x27;inlet_events&#x27;: InletEventsAccessors(_inlets=[], _assets={}, _asset_aliases={}),</div>
<div class="b" style="left:1231px;top:571.8px;width:29px;height:18px;background:#285a2e;border-radius:3px;"></div>
<div class="t" style="left:1028px;width:29px;text-align:right;top:575.8px;font-family:'Liberation Mono', monospace;font-size:12px;line-height:12px;color:#e4e4e7">15</div>
<div class="t" style="left:1073px;top:575.8px;font-family:'Liberation Mono', monospace;font-size:12px;line-height:12px;letter-spacing:0.02px;color:#e4e4e7">[2025–09–24 10:54:25] <span style="color:#bfeebf">INFO</span> –  &#x27;inlets&#x27;: [],</div>
<div class="b" style="left:1231px;top:589.8px;width:29px;height:18px;background:#285a2e;border-radius:3px;"></div>
<div class="t" style="left:1028px;width:29px;text-align:right;top:593.8px;font-family:'Liberation Mono', monospace;font-size:12px;line-height:12px;color:#e4e4e7">16</div>
<div class="t" style="left:1073px;top:593.8px;font-family:'Liberation Mono', monospace;font-size:12px;line-height:12px;letter-spacing:0.02px;color:#e4e4e7">[2025–09–24 10:54:25] <span style="color:#bfeebf">INFO</span> –  &#x27;logical_date&#x27;: DateTime(2025, 9, 24, 0, 0, 0, tzinfo=Timezone(&#x27;UTC&#x27;)),</div>
<div class="b" style="left:1231px;top:607.8px;width:29px;height:18px;background:#285a2e;border-radius:3px;"></div>
<div class="t" style="left:1028px;width:29px;text-align:right;top:611.8px;font-family:'Liberation Mono', monospace;font-size:12px;line-height:12px;color:#e4e4e7">17</div>
<div class="t" style="left:1073px;top:611.8px;font-family:'Liberation Mono', monospace;font-size:12px;line-height:12px;letter-spacing:0.02px;color:#e4e4e7">[2025–09–24 10:54:25] <span style="color:#bfeebf">INFO</span> –  &#x27;macros&#x27;: &lt;MacrosAccessor (dynamic access to macros)&gt;,</div>
<div class="b" style="left:1231px;top:625.8px;width:29px;height:18px;background:#285a2e;border-radius:3px;"></div>
<div class="t" style="left:1028px;width:29px;text-align:right;top:629.8px;font-family:'Liberation Mono', monospace;font-size:12px;line-height:12px;color:#e4e4e7">18</div>
<div class="t" style="left:1073px;top:629.8px;font-family:'Liberation Mono', monospace;font-size:12px;line-height:12px;letter-spacing:0.02px;color:#e4e4e7">[2025–09–24 10:54:25] <span style="color:#bfeebf">INFO</span> –  &#x27;map_index_template&#x27;: None,</div>
<div class="b" style="left:1231px;top:643.8px;width:29px;height:18px;background:#285a2e;border-radius:3px;"></div>
<div class="t" style="left:1028px;width:29px;text-align:right;top:647.8px;font-family:'Liberation Mono', monospace;font-size:12px;line-height:12px;color:#e4e4e7">19</div>
<div class="t" style="left:1073px;top:647.8px;font-family:'Liberation Mono', monospace;font-size:12px;line-height:12px;letter-spacing:0.02px;color:#e4e4e7">[2025–09–24 10:54:25] <span style="color:#bfeebf">INFO</span> –  &#x27;outlet_events&#x27;: &lt;airflow.sdk.execution_time.context.OutletEventAccessors object at 0xffff81a2b4d0&gt;,</div>
<div class="b" style="left:1231px;top:661.8px;width:29px;height:18px;background:#285a2e;border-radius:3px;"></div>
<div class="t" style="left:1028px;width:29px;text-align:right;top:665.8px;font-family:'Liberation Mono', monospace;font-size:12px;line-height:12px;color:#e4e4e7">20</div>
<div class="t" style="left:1073px;top:665.8px;font-family:'Liberation Mono', monospace;font-size:12px;line-height:12px;letter-spacing:0.02px;color:#e4e4e7">[2025–09–24 10:54:25] <span style="color:#bfeebf">INFO</span> –  &#x27;outlets&#x27;: [],</div>
<div class="b" style="left:1231px;top:679.8px;width:29px;height:18px;background:#285a2e;border-radius:3px;"></div>
<div class="t" style="left:1028px;width:29px;text-align:right;top:683.8px;font-family:'Liberation Mono', monospace;font-size:12px;line-height:12px;color:#e4e4e7">21</div>
<div class="t" style="left:1073px;top:683.8px;font-family:'Liberation Mono', monospace;font-size:12px;line-height:12px;letter-spacing:0.02px;color:#e4e4e7">[2025–09–24 10:54:25] <span style="color:#bfeebf">INFO</span> –  &#x27;params&#x27;: {},</div>
<div class="b" style="left:1231px;top:697.8px;width:29px;height:18px;background:#285a2e;border-radius:3px;"></div>
<div class="t" style="left:1028px;width:29px;text-align:right;top:701.8px;font-family:'Liberation Mono', monospace;font-size:12px;line-height:12px;color:#e4e4e7">22</div>
<div class="t" style="left:1073px;top:701.8px;font-family:'Liberation Mono', monospace;font-size:12px;line-height:12px;letter-spacing:0.02px;color:#e4e4e7">[2025–09–24 10:54:25] <span style="color:#bfeebf">INFO</span> –  &#x27;prev_data_interval_end_success&#x27;: &lt;Proxy at 0xffff819b4bc0 with factory &lt;function RuntimeTaskInstance.get_template_context&gt;&gt;,</div>
<div class="b" style="left:1231px;top:715.8px;width:29px;height:18px;background:#285a2e;border-radius:3px;"></div>
<div class="t" style="left:1028px;width:29px;text-align:right;top:719.8px;font-family:'Liberation Mono', monospace;font-size:12px;line-height:12px;color:#e4e4e7">23</div>
<div class="t" style="left:1073px;top:719.8px;font-family:'Liberation Mono', monospace;font-size:12px;line-height:12px;letter-spacing:0.02px;color:#e4e4e7">[2025–09–24 10:54:25] <span style="color:#bfeebf">INFO</span> –  &#x27;prev_data_interval_start_success&#x27;: &lt;Proxy at 0xffff81965300 with factory &lt;function RuntimeTaskInstance.get_template_context&gt;&gt;,</div>
<div class="b" style="left:1231px;top:733.8px;width:29px;height:18px;background:#285a2e;border-radius:3px;"></div>
<div class="t" style="left:1028px;width:29px;text-align:right;top:737.8px;font-family:'Liberation Mono', monospace;font-size:12px;line-height:12px;color:#e4e4e7">24</div>
<div class="t" style="left:1073px;top:737.8px;font-family:'Liberation Mono', monospace;font-size:12px;line-height:12px;letter-spacing:0.02px;color:#e4e4e7">[2025–09–24 10:54:25] <span style="color:#bfeebf">INFO</span> –  &#x27;prev_end_date_success&#x27;: &lt;Proxy at 0xffff81957300 with factory &lt;function RuntimeTaskInstance.get_template_context&gt;&gt;,</div>
<div class="b" style="left:1231px;top:751.8px;width:29px;height:18px;background:#285a2e;border-radius:3px;"></div>
<div class="t" style="left:1028px;width:29px;text-align:right;top:755.8px;font-family:'Liberation Mono', monospace;font-size:12px;line-height:12px;color:#e4e4e7">25</div>
<div class="t" style="left:1073px;top:755.8px;font-family:'Liberation Mono', monospace;font-size:12px;line-height:12px;letter-spacing:0.02px;color:#e4e4e7">[2025–09–24 10:54:25] <span style="color:#bfeebf">INFO</span> –  &#x27;prev_start_date_success&#x27;: &lt;Proxy at 0xffff81caeac0 with factory &lt;function RuntimeTaskInstance.get_template_context&gt;&gt;,</div>
<div class="b" style="left:1231px;top:769.8px;width:29px;height:18px;background:#285a2e;border-radius:3px;"></div>
<div class="t" style="left:1028px;width:29px;text-align:right;top:773.8px;font-family:'Liberation Mono', monospace;font-size:12px;line-height:12px;color:#e4e4e7">26</div>
<div class="t" style="left:1073px;top:773.8px;font-family:'Liberation Mono', monospace;font-size:12px;line-height:12px;letter-spacing:0.02px;color:#e4e4e7">[2025–09–24 10:54:25] <span style="color:#bfeebf">INFO</span> –  &#x27;run_id&#x27;: &#x27;scheduled__2025–09–24T00:00:00+00:00&#x27;,</div>
<div class="b" style="left:1231px;top:787.8px;width:29px;height:18px;background:#285a2e;border-radius:3px;"></div>
<div class="t" style="left:1028px;width:29px;text-align:right;top:791.8px;font-family:'Liberation Mono', monospace;font-size:12px;line-height:12px;color:#e4e4e7">27</div>
<div class="t" style="left:1073px;top:791.8px;font-family:'Liberation Mono', monospace;font-size:12px;line-height:12px;letter-spacing:0.02px;color:#e4e4e7">[2025–09–24 10:54:25] <span style="color:#bfeebf">INFO</span> –  &#x27;task&#x27;: &lt;Task(PythonOperator): section_2.inner_section_2.inner_section_3.print_the_context&gt;,</div>
<div class="b" style="left:1231px;top:805.8px;width:29px;height:18px;background:#285a2e;border-radius:3px;"></div>
<div class="t" style="left:1028px;width:29px;text-align:right;top:809.8px;font-family:'Liberation Mono', monospace;font-size:12px;line-height:12px;color:#e4e4e7">28</div>
<div class="t" style="left:1073px;top:809.8px;font-family:'Liberation Mono', monospace;font-size:12px;line-height:12px;letter-spacing:0.02px;color:#e4e4e7">[2025–09–24 10:54:25] <span style="color:#bfeebf">INFO</span> –  &#x27;task_instance&#x27;: RuntimeTaskInstance(id=UUID(&#x27;01997c37–6315–7f1d–b33d–992c90d51abc&#x27;), task_id=&#x27;section_2.inner_section_2&#x27;)</div>
<div class="b" style="left:1231px;top:823.8px;width:29px;height:18px;background:#285a2e;border-radius:3px;"></div>
<div class="t" style="left:1028px;width:29px;text-align:right;top:827.8px;font-family:'Liberation Mono', monospace;font-size:12px;line-height:12px;color:#e4e4e7">29</div>
<div class="t" style="left:1073px;top:827.8px;font-family:'Liberation Mono', monospace;font-size:12px;line-height:12px;letter-spacing:0.02px;color:#e4e4e7">[2025–09–24 10:54:25] <span style="color:#bfeebf">INFO</span> –  &#x27;task_instance_key_str&#x27;: &#x27;nested_groups__section_2.inner_section_2.inner_section_3.print_the_context__20250924&#x27;,</div>
<div class="b" style="left:1231px;top:841.8px;width:29px;height:18px;background:#285a2e;border-radius:3px;"></div>
<div class="t" style="left:1028px;width:29px;text-align:right;top:845.8px;font-family:'Liberation Mono', monospace;font-size:12px;line-height:12px;color:#e4e4e7">30</div>
<div class="t" style="left:1073px;top:845.8px;font-family:'Liberation Mono', monospace;font-size:12px;line-height:12px;letter-spacing:0.02px;color:#e4e4e7">[2025–09–24 10:54:25] <span style="color:#bfeebf">INFO</span> – Done. Returned value was: Whatever you return gets printed in the logs</div>
<div class="b" style="left:1231px;top:859.8px;width:29px;height:18px;background:#285a2e;border-radius:3px;"></div>
<div class="t" style="left:1028px;width:29px;text-align:right;top:863.8px;font-family:'Liberation Mono', monospace;font-size:12px;line-height:12px;color:#e4e4e7">31</div>
<div class="t" style="left:1073px;top:863.8px;font-family:'Liberation Mono', monospace;font-size:12px;line-height:12px;letter-spacing:0.02px;color:#e4e4e7">[2025–09–24 10:54:25] <span style="color:#bfeebf">INFO</span> – Pushing xcom <span style="color:#7fb2f0">ti</span>=RuntimeTaskInstance(id=UUID(&#x27;01997c37–6315–7f1d–b33d–992c90d51abc&#x27;), task_id=&#x27;section_2&#x27;)</div>
<div class="b" style="left:1231px;top:877.8px;width:29px;height:18px;background:#285a2e;border-radius:3px;"></div>
<div class="t" style="left:1028px;width:29px;text-align:right;top:881.8px;font-family:'Liberation Mono', monospace;font-size:12px;line-height:12px;color:#e4e4e7">32</div>
<div class="t" style="left:1073px;top:881.8px;font-family:'Liberation Mono', monospace;font-size:12px;line-height:12px;letter-spacing:0.02px;color:#e4e4e7">[2025–09–24 10:54:25] <span style="color:#bfeebf">INFO</span> –  &#x27;task_reschedule_count&#x27;: 0,</div>
<div class="b" style="left:1231px;top:895.8px;width:29px;height:18px;background:#285a2e;border-radius:3px;"></div>
<div class="t" style="left:1028px;width:29px;text-align:right;top:899.8px;font-family:'Liberation Mono', monospace;font-size:12px;line-height:12px;color:#e4e4e7">33</div>
<div class="t" style="left:1073px;top:899.8px;font-family:'Liberation Mono', monospace;font-size:12px;line-height:12px;letter-spacing:0.02px;color:#e4e4e7">[2025–09–24 10:54:25] <span style="color:#bfeebf">INFO</span> –  &#x27;templates_dict&#x27;: None,</div>
<div class="b" style="left:1231px;top:913.8px;width:29px;height:18px;background:#285a2e;border-radius:3px;"></div>
<div class="t" style="left:1028px;width:29px;text-align:right;top:917.8px;font-family:'Liberation Mono', monospace;font-size:12px;line-height:12px;color:#e4e4e7">34</div>
<div class="t" style="left:1073px;top:917.8px;font-family:'Liberation Mono', monospace;font-size:12px;line-height:12px;letter-spacing:0.02px;color:#e4e4e7">[2025–09–24 10:54:25] <span style="color:#bfeebf">INFO</span> –  &#x27;ti&#x27;: RuntimeTaskInstance(id=UUID(&#x27;01997c37–6315–7f1d–b33d–992c90d51abc&#x27;), task_id=&#x27;section_2.inner&#x27;)</div>
<div class="b" style="left:1231px;top:931.8px;width:29px;height:18px;background:#285a2e;border-radius:3px;"></div>
<div class="t" style="left:1028px;width:29px;text-align:right;top:935.8px;font-family:'Liberation Mono', monospace;font-size:12px;line-height:12px;color:#e4e4e7">35</div>
<div class="t" style="left:1073px;top:935.8px;font-family:'Liberation Mono', monospace;font-size:12px;line-height:12px;letter-spacing:0.02px;color:#e4e4e7">[2025–09–24 10:54:25] <span style="color:#bfeebf">INFO</span> –  &#x27;triggering_asset_events&#x27;: TriggeringAssetEventsAccessor(_events=defaultdict(&lt;class &#x27;list&#x27;&gt;, {})),</div>
<div class="b" style="left:1231px;top:949.8px;width:29px;height:18px;background:#285a2e;border-radius:3px;"></div>
<div class="t" style="left:1028px;width:29px;text-align:right;top:953.8px;font-family:'Liberation Mono', monospace;font-size:12px;line-height:12px;color:#e4e4e7">36</div>
<div class="t" style="left:1073px;top:953.8px;font-family:'Liberation Mono', monospace;font-size:12px;line-height:12px;letter-spacing:0.02px;color:#e4e4e7">[2025–09–24 10:54:25] <span style="color:#bfeebf">INFO</span> –  &#x27;ts&#x27;: &#x27;2025–09–24T00:00:00+00:00&#x27;,</div>
<div class="b" style="left:1231px;top:967.8px;width:29px;height:18px;background:#285a2e;border-radius:3px;"></div>
<div class="t" style="left:1028px;width:29px;text-align:right;top:971.8px;font-family:'Liberation Mono', monospace;font-size:12px;line-height:12px;color:#e4e4e7">37</div>
<div class="t" style="left:1073px;top:971.8px;font-family:'Liberation Mono', monospace;font-size:12px;line-height:12px;letter-spacing:0.02px;color:#e4e4e7">[2025–09–24 10:54:25] <span style="color:#bfeebf">INFO</span> –  &#x27;ts_nodash&#x27;: &#x27;20250924T000000&#x27;,</div>
<div class="b" style="left:1231px;top:985.8px;width:29px;height:18px;background:#285a2e;border-radius:3px;"></div>
<div class="t" style="left:1028px;width:29px;text-align:right;top:989.8px;font-family:'Liberation Mono', monospace;font-size:12px;line-height:12px;color:#e4e4e7">38</div>
<div class="t" style="left:1073px;top:989.8px;font-family:'Liberation Mono', monospace;font-size:12px;line-height:12px;letter-spacing:0.02px;color:#e4e4e7">[2025–09–24 10:54:25] <span style="color:#bfeebf">INFO</span> –  &#x27;ts_nodash_with_tz&#x27;: &#x27;20250924T000000+0000&#x27;,</div>
<div class="b" style="left:1231px;top:1003.8px;width:29px;height:18px;background:#285a2e;border-radius:3px;"></div>
<div class="t" style="left:1028px;width:29px;text-align:right;top:1007.8px;font-family:'Liberation Mono', monospace;font-size:12px;line-height:12px;color:#e4e4e7">39</div>
<div class="t" style="left:1073px;top:1007.8px;font-family:'Liberation Mono', monospace;font-size:12px;line-height:12px;letter-spacing:0.02px;color:#e4e4e7">[2025–09–24 10:54:25] <span style="color:#bfeebf">INFO</span> –  &#x27;var&#x27;: {&#x27;json&#x27;: &lt;VariableAccessor (dynamic access)&gt;,</div>
<div class="b" style="left:1231px;top:1021.8px;width:29px;height:18px;background:#285a2e;border-radius:3px;"></div>
<div class="t" style="left:1028px;width:29px;text-align:right;top:1025.8px;font-family:'Liberation Mono', monospace;font-size:12px;line-height:12px;color:#e4e4e7">40</div>
<div class="t" style="left:1073px;top:1025.8px;font-family:'Liberation Mono', monospace;font-size:12px;line-height:12px;letter-spacing:0.02px;color:#e4e4e7">[2025–09–24 10:54:25] <span style="color:#bfeebf">INFO</span> –          &#x27;value&#x27;: &lt;VariableAccessor (dynamic access)&gt;}}</div>
<div class="b" style="left:1231px;top:1039.8px;width:29px;height:18px;background:#285a2e;border-radius:3px;"></div>
<div class="t" style="left:1028px;width:29px;text-align:right;top:1043.8px;font-family:'Liberation Mono', monospace;font-size:12px;line-height:12px;color:#e4e4e7">41</div>
<div class="t" style="left:1073px;top:1043.8px;font-family:'Liberation Mono', monospace;font-size:12px;line-height:12px;letter-spacing:0.02px;color:#e4e4e7">[2025–09–24 10:54:25] <span style="color:#bfeebf">INFO</span> – 2025–09–24</div>
<div class="b" style="left:1231px;top:1057.8px;width:29px;height:18px;background:#285a2e;border-radius:3px;"></div>
<div class="t" style="left:1028px;width:29px;text-align:right;top:1061.8px;font-family:'Liberation Mono', monospace;font-size:12px;line-height:12px;color:#e4e4e7">42</div>
<div class="t" style="left:1073px;top:1061.8px;font-family:'Liberation Mono', monospace;font-size:12px;line-height:12px;letter-spacing:0.02px;color:#e4e4e7">[2025–09–24 10:54:25] <span style="color:#bfeebf">INFO</span> – Task instance in success state</div>
<div class="b" style="left:1231px;top:1075.8px;width:29px;height:18px;background:#285a2e;border-radius:3px;"></div>
<div class="t" style="left:1028px;width:29px;text-align:right;top:1079.8px;font-family:'Liberation Mono', monospace;font-size:12px;line-height:12px;color:#e4e4e7">43</div>
<div class="t" style="left:1073px;top:1079.8px;font-family:'Liberation Mono', monospace;font-size:12px;line-height:12px;letter-spacing:0.02px;color:#e4e4e7">[2025–09–24 10:54:25] <span style="color:#bfeebf">INFO</span> –  Previous state of the Task instance: TaskInstanceState.RUNNING</div>
<div class="b" style="left:1231px;top:1093.8px;width:29px;height:18px;background:#285a2e;border-radius:3px;"></div>
<div class="t" style="left:1028px;width:29px;text-align:right;top:1097.8px;font-family:'Liberation Mono', monospace;font-size:12px;line-height:12px;color:#e4e4e7">44</div>
<div class="t" style="left:1073px;top:1097.8px;font-family:'Liberation Mono', monospace;font-size:12px;line-height:12px;letter-spacing:0.02px;color:#e4e4e7">[2025–09–24 10:54:25] <span style="color:#bfeebf">INFO</span> – Task operator:&lt;Task(PythonOperator): section_2.inner_section_2.inner_section_3.print_the_context&gt;</div>
</div></body></html>
